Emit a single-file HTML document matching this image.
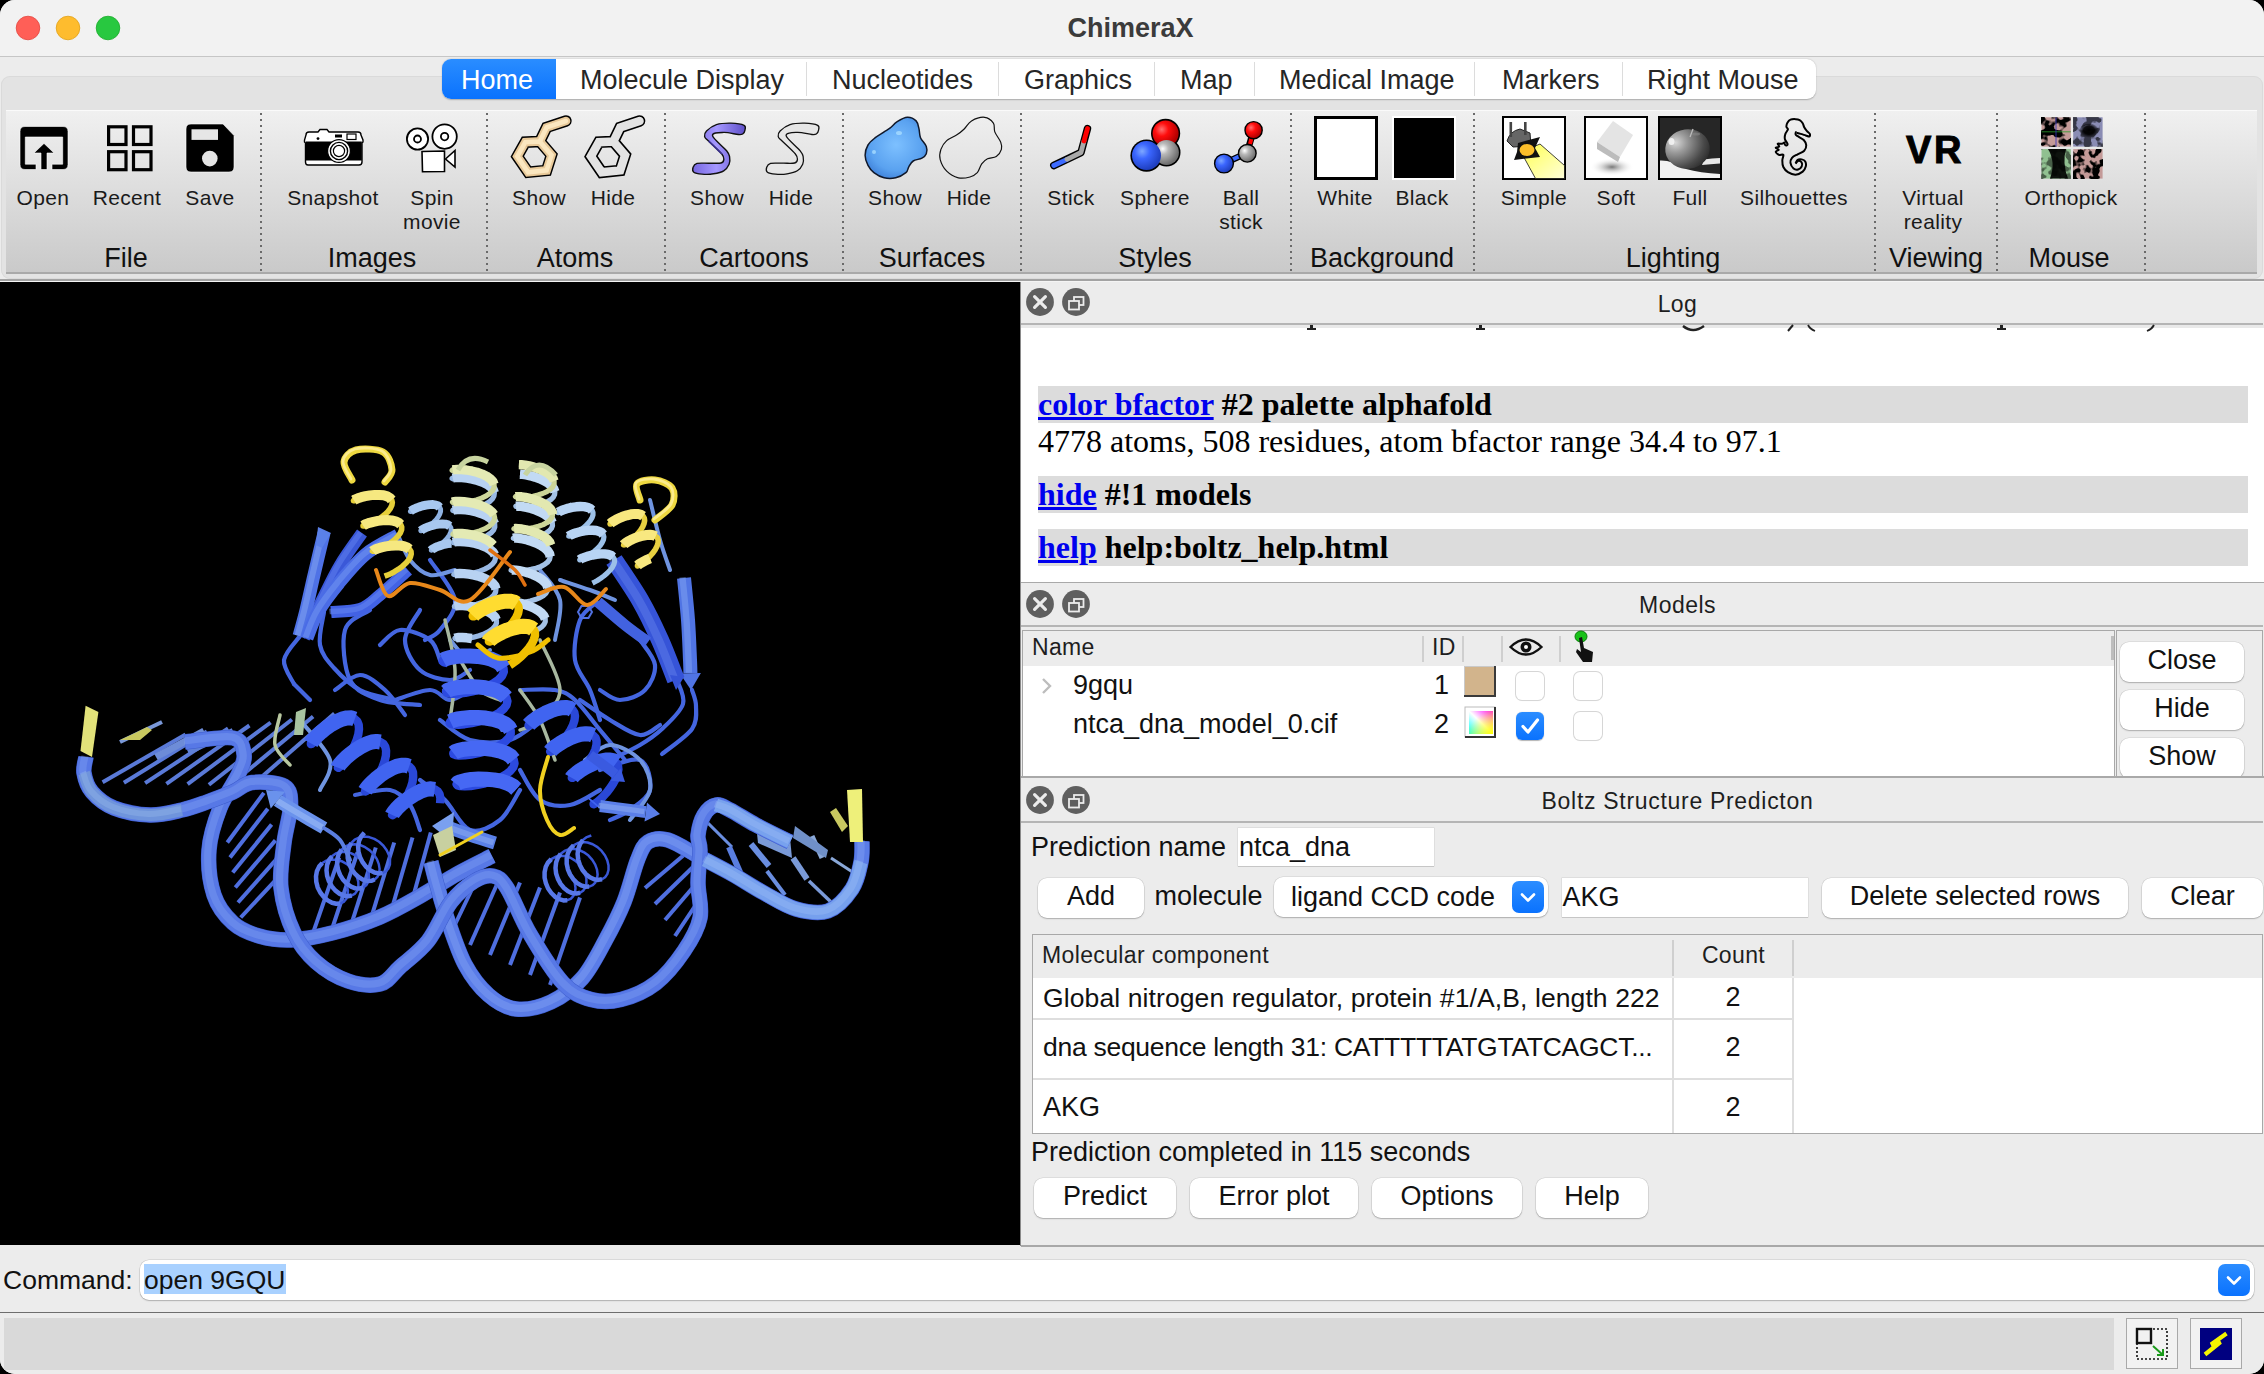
<!DOCTYPE html><html><head><meta charset="utf-8"><style>
html,body{margin:0;padding:0;background:#000;}
#w{position:absolute;left:0;top:0;width:2264px;height:1374px;overflow:hidden;border-radius:15px;background:#ececec;font-family:'Liberation Sans',sans-serif;}
svg{overflow:visible}
</style></head><body><div id="w">
<div style="position:absolute;left:0px;top:0px;width:2264px;height:56px;background:#f2f2f2"></div>
<div style="position:absolute;left:0px;top:56px;width:2264px;height:1px;background:#c6c6c6"></div>
<svg style="position:absolute;left:14.5px;top:14.5px" width="26" height="26" viewBox="0 0 26 26"><circle cx="13" cy="13" r="11.8" fill="#ff5f57" stroke="#e2463f" stroke-width="0.8"/></svg>
<svg style="position:absolute;left:54.5px;top:14.5px" width="26" height="26" viewBox="0 0 26 26"><circle cx="13" cy="13" r="11.8" fill="#febc2e" stroke="#e1a116" stroke-width="0.8"/></svg>
<svg style="position:absolute;left:94.5px;top:14.5px" width="26" height="26" viewBox="0 0 26 26"><circle cx="13" cy="13" r="11.8" fill="#28c840" stroke="#1aab29" stroke-width="0.8"/></svg>
<div style="position:absolute;top:14.64px;font-family:'Liberation Sans', sans-serif;font-size:27px;line-height:27px;color:#3b3b3b;font-weight:bold;white-space:nowrap;left:730.5px;width:800px;text-align:center;">ChimeraX</div>
<div style="position:absolute;left:1px;top:76px;width:2262px;height:203px;background:#e3e3e3;border-radius:9px;box-shadow:inset 0 0 0 1px #dadada"></div>
<div style="position:absolute;left:6px;top:110px;width:2251px;height:164px;background:linear-gradient(#f0f0f0,#c9c9c9);border-top:1px solid #fafafa;box-sizing:border-box"></div>
<div style="position:absolute;left:6px;top:272px;width:2251px;height:2px;background:#a9a9a9"></div>
<div style="position:absolute;left:0px;top:279px;width:2264px;height:2px;background:#a3a3a3"></div>
<div style="position:absolute;left:0px;top:281px;width:2264px;height:1px;background:#f4f4f4"></div>
<div style="position:absolute;left:442px;top:59px;width:1374px;height:40px;background:#fff;border-radius:9px;box-shadow:0 0.5px 1.5px rgba(0,0,0,0.25)"></div>
<div style="position:absolute;left:442px;top:59px;width:114px;height:40px;background:linear-gradient(#2a8dff,#0a72fe);border-radius:9px 0 0 9px"></div>
<div style="position:absolute;top:66.94px;font-family:'Liberation Sans', sans-serif;font-size:27px;line-height:27px;color:#fff;font-weight:normal;white-space:nowrap;left:461px;">Home</div>
<div style="position:absolute;top:66.94px;font-family:'Liberation Sans', sans-serif;font-size:27px;line-height:27px;color:#262626;font-weight:normal;white-space:nowrap;left:580px;">Molecule Display</div>
<div style="position:absolute;left:806px;top:62px;width:1px;height:34px;background:#dcdcdc"></div>
<div style="position:absolute;top:66.94px;font-family:'Liberation Sans', sans-serif;font-size:27px;line-height:27px;color:#262626;font-weight:normal;white-space:nowrap;left:832px;">Nucleotides</div>
<div style="position:absolute;left:998px;top:62px;width:1px;height:34px;background:#dcdcdc"></div>
<div style="position:absolute;top:66.94px;font-family:'Liberation Sans', sans-serif;font-size:27px;line-height:27px;color:#262626;font-weight:normal;white-space:nowrap;left:1024px;">Graphics</div>
<div style="position:absolute;left:1154px;top:62px;width:1px;height:34px;background:#dcdcdc"></div>
<div style="position:absolute;top:66.94px;font-family:'Liberation Sans', sans-serif;font-size:27px;line-height:27px;color:#262626;font-weight:normal;white-space:nowrap;left:1180px;">Map</div>
<div style="position:absolute;left:1254px;top:62px;width:1px;height:34px;background:#dcdcdc"></div>
<div style="position:absolute;top:66.94px;font-family:'Liberation Sans', sans-serif;font-size:27px;line-height:27px;color:#262626;font-weight:normal;white-space:nowrap;left:1279px;">Medical Image</div>
<div style="position:absolute;left:1474px;top:62px;width:1px;height:34px;background:#dcdcdc"></div>
<div style="position:absolute;top:66.94px;font-family:'Liberation Sans', sans-serif;font-size:27px;line-height:27px;color:#262626;font-weight:normal;white-space:nowrap;left:1502px;">Markers</div>
<div style="position:absolute;left:1622px;top:62px;width:1px;height:34px;background:#dcdcdc"></div>
<div style="position:absolute;top:66.94px;font-family:'Liberation Sans', sans-serif;font-size:27px;line-height:27px;color:#262626;font-weight:normal;white-space:nowrap;left:1647px;">Right Mouse</div>
<div style="position:absolute;left:260px;top:113px;width:2px;height:158px;background:repeating-linear-gradient(#6a6a6a 0 2px, transparent 2px 6px)"></div>
<div style="position:absolute;left:486px;top:113px;width:2px;height:158px;background:repeating-linear-gradient(#6a6a6a 0 2px, transparent 2px 6px)"></div>
<div style="position:absolute;left:664px;top:113px;width:2px;height:158px;background:repeating-linear-gradient(#6a6a6a 0 2px, transparent 2px 6px)"></div>
<div style="position:absolute;left:842px;top:113px;width:2px;height:158px;background:repeating-linear-gradient(#6a6a6a 0 2px, transparent 2px 6px)"></div>
<div style="position:absolute;left:1020px;top:113px;width:2px;height:158px;background:repeating-linear-gradient(#6a6a6a 0 2px, transparent 2px 6px)"></div>
<div style="position:absolute;left:1290px;top:113px;width:2px;height:158px;background:repeating-linear-gradient(#6a6a6a 0 2px, transparent 2px 6px)"></div>
<div style="position:absolute;left:1473px;top:113px;width:2px;height:158px;background:repeating-linear-gradient(#6a6a6a 0 2px, transparent 2px 6px)"></div>
<div style="position:absolute;left:1874px;top:113px;width:2px;height:158px;background:repeating-linear-gradient(#6a6a6a 0 2px, transparent 2px 6px)"></div>
<div style="position:absolute;left:1996px;top:113px;width:2px;height:158px;background:repeating-linear-gradient(#6a6a6a 0 2px, transparent 2px 6px)"></div>
<div style="position:absolute;left:2144px;top:113px;width:2px;height:158px;background:repeating-linear-gradient(#6a6a6a 0 2px, transparent 2px 6px)"></div>
<div style="position:absolute;top:187.22px;font-family:'Liberation Sans', sans-serif;font-size:21px;line-height:21px;color:#1a1a1a;font-weight:normal;white-space:nowrap;letter-spacing:0.35px;left:-357px;width:800px;text-align:center;">Open</div>
<div style="position:absolute;top:187.22px;font-family:'Liberation Sans', sans-serif;font-size:21px;line-height:21px;color:#1a1a1a;font-weight:normal;white-space:nowrap;letter-spacing:0.35px;left:-273px;width:800px;text-align:center;">Recent</div>
<div style="position:absolute;top:187.22px;font-family:'Liberation Sans', sans-serif;font-size:21px;line-height:21px;color:#1a1a1a;font-weight:normal;white-space:nowrap;letter-spacing:0.35px;left:-190px;width:800px;text-align:center;">Save</div>
<div style="position:absolute;top:187.22px;font-family:'Liberation Sans', sans-serif;font-size:21px;line-height:21px;color:#1a1a1a;font-weight:normal;white-space:nowrap;letter-spacing:0.35px;left:-67px;width:800px;text-align:center;">Snapshot</div>
<div style="position:absolute;top:187.22px;font-family:'Liberation Sans', sans-serif;font-size:21px;line-height:21px;color:#1a1a1a;font-weight:normal;white-space:nowrap;letter-spacing:0.35px;left:32px;width:800px;text-align:center;">Spin</div>
<div style="position:absolute;top:187.22px;font-family:'Liberation Sans', sans-serif;font-size:21px;line-height:21px;color:#1a1a1a;font-weight:normal;white-space:nowrap;letter-spacing:0.35px;left:139px;width:800px;text-align:center;">Show</div>
<div style="position:absolute;top:187.22px;font-family:'Liberation Sans', sans-serif;font-size:21px;line-height:21px;color:#1a1a1a;font-weight:normal;white-space:nowrap;letter-spacing:0.35px;left:213px;width:800px;text-align:center;">Hide</div>
<div style="position:absolute;top:187.22px;font-family:'Liberation Sans', sans-serif;font-size:21px;line-height:21px;color:#1a1a1a;font-weight:normal;white-space:nowrap;letter-spacing:0.35px;left:317px;width:800px;text-align:center;">Show</div>
<div style="position:absolute;top:187.22px;font-family:'Liberation Sans', sans-serif;font-size:21px;line-height:21px;color:#1a1a1a;font-weight:normal;white-space:nowrap;letter-spacing:0.35px;left:391px;width:800px;text-align:center;">Hide</div>
<div style="position:absolute;top:187.22px;font-family:'Liberation Sans', sans-serif;font-size:21px;line-height:21px;color:#1a1a1a;font-weight:normal;white-space:nowrap;letter-spacing:0.35px;left:495px;width:800px;text-align:center;">Show</div>
<div style="position:absolute;top:187.22px;font-family:'Liberation Sans', sans-serif;font-size:21px;line-height:21px;color:#1a1a1a;font-weight:normal;white-space:nowrap;letter-spacing:0.35px;left:569px;width:800px;text-align:center;">Hide</div>
<div style="position:absolute;top:187.22px;font-family:'Liberation Sans', sans-serif;font-size:21px;line-height:21px;color:#1a1a1a;font-weight:normal;white-space:nowrap;letter-spacing:0.35px;left:671px;width:800px;text-align:center;">Stick</div>
<div style="position:absolute;top:187.22px;font-family:'Liberation Sans', sans-serif;font-size:21px;line-height:21px;color:#1a1a1a;font-weight:normal;white-space:nowrap;letter-spacing:0.35px;left:755px;width:800px;text-align:center;">Sphere</div>
<div style="position:absolute;top:187.22px;font-family:'Liberation Sans', sans-serif;font-size:21px;line-height:21px;color:#1a1a1a;font-weight:normal;white-space:nowrap;letter-spacing:0.35px;left:841px;width:800px;text-align:center;">Ball</div>
<div style="position:absolute;top:187.22px;font-family:'Liberation Sans', sans-serif;font-size:21px;line-height:21px;color:#1a1a1a;font-weight:normal;white-space:nowrap;letter-spacing:0.35px;left:945px;width:800px;text-align:center;">White</div>
<div style="position:absolute;top:187.22px;font-family:'Liberation Sans', sans-serif;font-size:21px;line-height:21px;color:#1a1a1a;font-weight:normal;white-space:nowrap;letter-spacing:0.35px;left:1022px;width:800px;text-align:center;">Black</div>
<div style="position:absolute;top:187.22px;font-family:'Liberation Sans', sans-serif;font-size:21px;line-height:21px;color:#1a1a1a;font-weight:normal;white-space:nowrap;letter-spacing:0.35px;left:1134px;width:800px;text-align:center;">Simple</div>
<div style="position:absolute;top:187.22px;font-family:'Liberation Sans', sans-serif;font-size:21px;line-height:21px;color:#1a1a1a;font-weight:normal;white-space:nowrap;letter-spacing:0.35px;left:1216px;width:800px;text-align:center;">Soft</div>
<div style="position:absolute;top:187.22px;font-family:'Liberation Sans', sans-serif;font-size:21px;line-height:21px;color:#1a1a1a;font-weight:normal;white-space:nowrap;letter-spacing:0.35px;left:1290px;width:800px;text-align:center;">Full</div>
<div style="position:absolute;top:187.22px;font-family:'Liberation Sans', sans-serif;font-size:21px;line-height:21px;color:#1a1a1a;font-weight:normal;white-space:nowrap;letter-spacing:0.35px;left:1394px;width:800px;text-align:center;">Silhouettes</div>
<div style="position:absolute;top:187.22px;font-family:'Liberation Sans', sans-serif;font-size:21px;line-height:21px;color:#1a1a1a;font-weight:normal;white-space:nowrap;letter-spacing:0.35px;left:1533px;width:800px;text-align:center;">Virtual</div>
<div style="position:absolute;top:187.22px;font-family:'Liberation Sans', sans-serif;font-size:21px;line-height:21px;color:#1a1a1a;font-weight:normal;white-space:nowrap;letter-spacing:0.35px;left:1671px;width:800px;text-align:center;">Orthopick</div>
<div style="position:absolute;top:211.22px;font-family:'Liberation Sans', sans-serif;font-size:21px;line-height:21px;color:#1a1a1a;font-weight:normal;white-space:nowrap;letter-spacing:0.35px;left:32px;width:800px;text-align:center;">movie</div>
<div style="position:absolute;top:211.22px;font-family:'Liberation Sans', sans-serif;font-size:21px;line-height:21px;color:#1a1a1a;font-weight:normal;white-space:nowrap;letter-spacing:0.35px;left:841px;width:800px;text-align:center;">stick</div>
<div style="position:absolute;top:211.22px;font-family:'Liberation Sans', sans-serif;font-size:21px;line-height:21px;color:#1a1a1a;font-weight:normal;white-space:nowrap;letter-spacing:0.35px;left:1533px;width:800px;text-align:center;">reality</div>
<div style="position:absolute;top:245.14px;font-family:'Liberation Sans', sans-serif;font-size:27px;line-height:27px;color:#111;font-weight:normal;white-space:nowrap;left:-274px;width:800px;text-align:center;">File</div>
<div style="position:absolute;top:245.14px;font-family:'Liberation Sans', sans-serif;font-size:27px;line-height:27px;color:#111;font-weight:normal;white-space:nowrap;left:-28px;width:800px;text-align:center;">Images</div>
<div style="position:absolute;top:245.14px;font-family:'Liberation Sans', sans-serif;font-size:27px;line-height:27px;color:#111;font-weight:normal;white-space:nowrap;left:175px;width:800px;text-align:center;">Atoms</div>
<div style="position:absolute;top:245.14px;font-family:'Liberation Sans', sans-serif;font-size:27px;line-height:27px;color:#111;font-weight:normal;white-space:nowrap;left:354px;width:800px;text-align:center;">Cartoons</div>
<div style="position:absolute;top:245.14px;font-family:'Liberation Sans', sans-serif;font-size:27px;line-height:27px;color:#111;font-weight:normal;white-space:nowrap;left:532px;width:800px;text-align:center;">Surfaces</div>
<div style="position:absolute;top:245.14px;font-family:'Liberation Sans', sans-serif;font-size:27px;line-height:27px;color:#111;font-weight:normal;white-space:nowrap;left:755px;width:800px;text-align:center;">Styles</div>
<div style="position:absolute;top:245.14px;font-family:'Liberation Sans', sans-serif;font-size:27px;line-height:27px;color:#111;font-weight:normal;white-space:nowrap;left:982px;width:800px;text-align:center;">Background</div>
<div style="position:absolute;top:245.14px;font-family:'Liberation Sans', sans-serif;font-size:27px;line-height:27px;color:#111;font-weight:normal;white-space:nowrap;left:1273px;width:800px;text-align:center;">Lighting</div>
<div style="position:absolute;top:245.14px;font-family:'Liberation Sans', sans-serif;font-size:27px;line-height:27px;color:#111;font-weight:normal;white-space:nowrap;left:1536px;width:800px;text-align:center;">Viewing</div>
<div style="position:absolute;top:245.14px;font-family:'Liberation Sans', sans-serif;font-size:27px;line-height:27px;color:#111;font-weight:normal;white-space:nowrap;left:1669px;width:800px;text-align:center;">Mouse</div>
<svg style="position:absolute;left:0px;top:0px;" width="2264" height="282">
<g>
<!-- Open -->
<path d="M25 126.5 H63 Q68 126.5 68 131.5 V164.5 Q68 169.5 63 169.5 H52 V164.2 H62.7 V137 H25.3 V164.2 H36 V169.5 H25 Q20 169.5 20 164.5 V131.5 Q20 126.5 25 126.5Z" fill="#000" stroke="#fff" stroke-opacity="0.6" stroke-width="1"/>
<path d="M41 169.5 V153 H34 L44 143.4 L54 153 H47 V169.5Z" fill="#000" stroke="#fff" stroke-opacity="0.6" stroke-width="1"/>
<!-- Recent -->
<rect x="108.6" y="126.8" width="17.4" height="17.7" fill="none" stroke="#000" stroke-width="3.2"/>
<rect x="133.5" y="126.8" width="17.5" height="17.7" fill="none" stroke="#000" stroke-width="3.2"/>
<rect x="108.6" y="151.7" width="17.4" height="18" fill="none" stroke="#000" stroke-width="3.2"/>
<rect x="133.5" y="151.7" width="17.5" height="18" fill="none" stroke="#000" stroke-width="3.2"/>
<!-- Save -->
<path d="M191 124 H223 L234 135.5 V167 Q234 172 229 172 H191 Q186 172 186 167 V129 Q186 124 191 124Z" fill="#000" stroke="#fff" stroke-opacity="0.6" stroke-width="1"/>
<rect x="191.5" y="129.3" width="26.5" height="10.6" fill="#e6e6e6"/>
<circle cx="209.8" cy="158.6" r="7.8" fill="#e4e4e4"/>
</g>
<!-- Snapshot camera -->
<g>
<path d="M309 132 L318 132 L320 129.5 L327 129.5 L329 132 L358 132 Q361 132 361 135 L363 140 L363 142 L362 143 L362 162 Q362 165 359 165 L308 165 Q305.5 165 305.5 162 L305.5 143 L304.5 142 L304.5 140 L306 135 Q306 132 309 132Z" fill="#fff" stroke="#000" stroke-width="1.4"/>
<rect x="305.8" y="141.5" width="56" height="19" fill="#000"/>
<rect x="335" y="134.5" width="7" height="3" fill="#000"/>
<rect x="347" y="134" width="9" height="5.5" fill="#fff" stroke="#000" stroke-width="1.2"/>
<circle cx="318" cy="138.6" r="1.4" fill="#000"/>
<circle cx="339" cy="151" r="11.4" fill="#fff" stroke="#000" stroke-width="1.2"/>
<circle cx="339" cy="151" r="8.6" fill="#fff" stroke="#000" stroke-width="1.4"/>
<circle cx="339" cy="151" r="5.6" fill="#fff" stroke="#000" stroke-width="1.2"/>
</g>
<!-- Spin movie -->
<g stroke="#000" fill="#fff">
<circle cx="417.5" cy="139" r="10.6" stroke-width="1.8"/>
<circle cx="417.5" cy="139" r="3.5" stroke-width="1.8"/>
<circle cx="444.6" cy="136.6" r="12.2" stroke-width="1.8"/>
<circle cx="444.6" cy="136.6" r="3.7" stroke-width="1.8"/>
<path d="M422 151.5 L444.5 151 L444.5 171.5 L422.5 171.8Z" stroke-width="1.6"/>
<path d="M445.5 159 L455 150.5 L455 167 Z" stroke-width="1.6"/>
</g>
</svg>
<svg style="position:absolute;left:0px;top:0px;" width="700" height="282">
<g fill="none" stroke-linejoin="round" stroke-linecap="round">
<path d="M517.3 156.4 L525.3 142.2 L539.8 141.5 L551.5 155.1 L546.6 170.4 L528.2 172.3Z M539.8 141.5 L546.6 127.4 L566 121" stroke="#000" stroke-width="11.5" stroke-linejoin="miter"/>
<path d="M517.3 156.4 L525.3 142.2 L539.8 141.5 L551.5 155.1 L546.6 170.4 L528.2 172.3Z M539.8 141.5 L546.6 127.4 L566 121" stroke="#e8c999" stroke-width="8.6" stroke-linejoin="miter"/>
<path d="M517.3 156.4 L525.3 142.2 L539.8 141.5 L551.5 155.1 L546.6 170.4 L528.2 172.3Z M539.8 141.5 L546.6 127.4 L566 121" stroke="#fbe7c0" stroke-width="4.6" stroke-linejoin="miter"/>
</g>
<g fill="none" stroke-linejoin="miter" stroke-linecap="round" transform="translate(73.6,0)">
<path d="M517.3 156.4 L525.3 142.2 L539.8 141.5 L551.5 155.1 L546.6 170.4 L528.2 172.3Z M539.8 141.5 L546.6 127.4 L566 121" stroke="#000" stroke-width="11.6"/>
<path d="M517.3 156.4 L525.3 142.2 L539.8 141.5 L551.5 155.1 L546.6 170.4 L528.2 172.3Z M539.8 141.5 L546.6 127.4 L566 121" stroke="#e3e3e3" stroke-width="8.4"/>
</g>
</svg>
<svg style="position:absolute;left:0px;top:0px;" width="1100" height="282">
<defs><linearGradient id="pg" x1="0" y1="0" x2="1" y2="0"><stop offset="0" stop-color="#7767e0"/><stop offset="0.45" stop-color="#a598ff"/><stop offset="1" stop-color="#5e4fc8"/></linearGradient></defs>
<path d="M744.1 125.3 C741.8 124.1 735.6 123.2 731.0 123.1 C726.4 123.0 720.5 123.3 716.4 124.6 C712.3 125.9 708.5 129.0 706.5 131.0 C704.5 133.0 704.3 134.8 704.6 136.5 C704.9 138.2 705.6 138.1 708.5 141.0 C711.4 143.9 719.2 150.9 721.8 154.0 C724.3 157.1 723.9 158.1 723.8 159.6 C723.7 161.1 723.5 162.4 721.0 163.0 C718.5 163.6 713.1 163.1 709.1 163.2 C705.1 163.3 699.7 162.7 697.0 163.4 C694.3 164.1 693.6 165.8 693.1 167.3 C692.6 168.8 692.3 171.1 693.8 172.2 C695.3 173.3 698.6 173.8 701.9 174.1 C705.2 174.4 709.9 174.4 713.5 173.8 C717.1 173.2 721.1 172.4 723.7 170.8 C726.3 169.2 728.1 166.5 729.1 164.2 C730.1 161.9 730.0 159.2 729.6 157.0 C729.2 154.8 729.5 154.4 726.6 150.8 C723.8 147.2 713.0 138.7 712.5 135.6 C712.0 132.5 719.4 132.6 723.7 132.4 C728.0 132.2 735.1 134.2 738.3 134.5 C741.5 134.8 741.6 134.7 742.7 134.0 C743.8 133.3 744.7 131.8 744.9 130.4 C745.1 129.0 746.4 126.5 744.1 125.3Z" fill="url(#pg)" stroke="#111" stroke-width="1.4"/>
<path d="M708.5 141 L721.8 154" fill="none" stroke="#3a3090" stroke-width="1.6"/>
<g transform="translate(73.6,0)"><path d="M744.1 125.3 C741.8 124.1 735.6 123.2 731.0 123.1 C726.4 123.0 720.5 123.3 716.4 124.6 C712.3 125.9 708.5 129.0 706.5 131.0 C704.5 133.0 704.3 134.8 704.6 136.5 C704.9 138.2 705.6 138.1 708.5 141.0 C711.4 143.9 719.2 150.9 721.8 154.0 C724.3 157.1 723.9 158.1 723.8 159.6 C723.7 161.1 723.5 162.4 721.0 163.0 C718.5 163.6 713.1 163.1 709.1 163.2 C705.1 163.3 699.7 162.7 697.0 163.4 C694.3 164.1 693.6 165.8 693.1 167.3 C692.6 168.8 692.3 171.1 693.8 172.2 C695.3 173.3 698.6 173.8 701.9 174.1 C705.2 174.4 709.9 174.4 713.5 173.8 C717.1 173.2 721.1 172.4 723.7 170.8 C726.3 169.2 728.1 166.5 729.1 164.2 C730.1 161.9 730.0 159.2 729.6 157.0 C729.2 154.8 729.5 154.4 726.6 150.8 C723.8 147.2 713.0 138.7 712.5 135.6 C712.0 132.5 719.4 132.6 723.7 132.4 C728.0 132.2 735.1 134.2 738.3 134.5 C741.5 134.8 741.6 134.7 742.7 134.0 C743.8 133.3 744.7 131.8 744.9 130.4 C745.1 129.0 746.4 126.5 744.1 125.3Z" fill="#e6e6e6" stroke="#111" stroke-width="1.3"/>
</g>
</svg>
<svg style="position:absolute;left:0px;top:0px;" width="1100" height="282">
<defs><radialGradient id="bg1" cx="0.5" cy="0.45" r="0.6"><stop offset="0" stop-color="#7dc0ff"/><stop offset="0.7" stop-color="#5aa2f0"/><stop offset="1" stop-color="#3d7fd8"/></radialGradient></defs>
<path d="M907.4 117.3 C910.5 117.2 914.2 119.0 916.1 120.9 C918.0 122.8 918.3 126.1 919.0 128.9 C919.7 131.7 919.3 134.8 920.5 137.7 C921.7 140.6 925.3 143.7 926.3 146.4 C927.3 149.1 927.0 151.8 926.3 153.7 C925.6 155.6 924.1 156.9 921.9 158.1 C919.7 159.3 915.4 159.6 913.2 161.0 C911.0 162.4 910.0 164.9 908.8 166.8 C907.6 168.8 908.1 170.9 905.9 172.7 C903.7 174.5 899.3 177.0 895.7 177.8 C892.1 178.7 887.7 178.7 884.1 177.8 C880.5 177.0 876.6 174.8 873.9 172.7 C871.2 170.6 869.5 168.3 868.0 165.4 C866.5 162.5 865.1 158.6 865.1 155.2 C865.1 151.8 866.3 147.9 868.0 145.0 C869.7 142.1 872.6 139.9 875.3 137.7 C878.0 135.5 881.7 133.5 884.1 131.9 C886.5 130.3 887.7 129.9 889.9 128.2 C892.1 126.5 894.3 123.5 897.2 121.7 C900.1 119.9 904.2 117.4 907.4 117.3Z" fill="url(#bg1)" stroke="#10182a" stroke-width="1.5"/>
<ellipse cx="899" cy="133" rx="3" ry="2" fill="#a8dcff" opacity="0.8"/>
<ellipse cx="874" cy="152" rx="2" ry="2" fill="#a8dcff" opacity="0.8"/>
<path d="M984.6 117.3 C988.2 117.7 991.7 120.7 993.4 123.1 C995.1 125.5 993.6 128.7 994.8 131.9 C996.0 135.1 999.6 139.2 1000.7 142.1 C1001.8 145.0 1002.1 147.0 1001.4 149.4 C1000.7 151.8 998.6 155.0 996.3 156.6 C994.0 158.2 989.9 157.6 987.5 158.8 C985.1 160.0 983.4 161.6 981.7 163.9 C980.0 166.2 979.2 170.5 977.3 172.7 C975.3 174.9 973.1 176.2 970.0 177.0 C966.9 177.8 962.3 178.8 958.4 177.8 C954.5 176.8 949.7 174.2 946.7 171.2 C943.7 168.2 941.2 163.2 940.2 159.6 C939.2 156.0 939.8 152.6 940.9 149.4 C942.0 146.2 944.0 143.0 946.7 140.6 C949.4 138.2 954.0 136.7 956.9 134.8 C959.8 132.9 961.8 131.3 964.2 129.0 C966.6 126.7 968.1 122.9 971.5 120.9 C974.9 119.0 981.0 116.9 984.6 117.3Z" fill="none" stroke="#111" stroke-width="1.2"/>
</svg>
<svg style="position:absolute;left:0px;top:0px;" width="1300" height="282">
<defs>
<radialGradient id="rb" cx="0.35" cy="0.35" r="0.65"><stop offset="0" stop-color="#7ea8ff"/><stop offset="0.4" stop-color="#3b66ff"/><stop offset="1" stop-color="#1f3fc0"/></radialGradient>
<radialGradient id="rg" cx="0.35" cy="0.35" r="0.65"><stop offset="0" stop-color="#ffffff"/><stop offset="0.35" stop-color="#b8b8b8"/><stop offset="1" stop-color="#6e6e6e"/></radialGradient>
<radialGradient id="rr" cx="0.35" cy="0.35" r="0.65"><stop offset="0" stop-color="#ff7070"/><stop offset="0.4" stop-color="#ff0d0d"/><stop offset="1" stop-color="#b00000"/></radialGradient>
</defs>
<g fill="none" stroke-linecap="round" stroke-linejoin="round">
<path d="M1053.8 165.5 L1081 152.5 L1087.5 128.5" stroke="#000" stroke-width="7.5"/>
<path d="M1053.8 165.5 L1067 159.3" stroke="#3d6bff" stroke-width="4.8"/>
<path d="M1067 159.3 L1081 152.5 L1084 141" stroke="#a8a8a8" stroke-width="4.8"/>
<path d="M1084 141 L1087.5 128.5" stroke="#f00" stroke-width="4.8"/>
</g>
<circle cx="1165.6" cy="133.4" r="14.6" fill="#000"/>
<circle cx="1166.5" cy="152.5" r="14" fill="#000"/>
<circle cx="1146.5" cy="155.6" r="16.1" fill="#000"/>
<circle cx="1165.6" cy="133.4" r="13" fill="url(#rr)"/>
<circle cx="1166.5" cy="152.5" r="12.4" fill="url(#rg)"/>
<circle cx="1146.5" cy="155.6" r="14.5" fill="url(#rb)"/>
<path d="M1224 163.5 L1247 153 L1253.6 130" stroke="#000" stroke-width="6.5" fill="none"/>
<path d="M1224 163.5 L1240 156" stroke="#3d6bff" stroke-width="4" fill="none"/>
<path d="M1250 144 L1253.6 130" stroke="#f00" stroke-width="4" fill="none"/>
<circle cx="1253.6" cy="130.2" r="8.6" fill="url(#rr)" stroke="#000" stroke-width="1.4"/>
<circle cx="1247.3" cy="153.3" r="8.8" fill="url(#rg)" stroke="#000" stroke-width="1.4"/>
<circle cx="1224" cy="163.5" r="9.4" fill="url(#rb)" stroke="#000" stroke-width="1.4"/>
</svg>
<svg style="position:absolute;left:0px;top:0px;" width="1500" height="282">
<rect x="1315.5" y="117.5" width="61" height="61" fill="#fff" stroke="#000" stroke-width="3"/>
<rect x="1392" y="116" width="64" height="64" fill="#fff"/>
<rect x="1394" y="118" width="60" height="60" fill="#000"/>
</svg>
<svg style="position:absolute;left:0px;top:0px;" width="2264" height="282">
<defs>
<linearGradient id="beam" x1="0" y1="0" x2="1" y2="1"><stop offset="0" stop-color="#ffff50"/><stop offset="1" stop-color="#ffffd8"/></linearGradient>
<radialGradient id="shadow" cx="0.5" cy="0.5" r="0.5"><stop offset="0" stop-color="#777"/><stop offset="1" stop-color="#fff" stop-opacity="0"/></radialGradient>
<radialGradient id="apple" cx="0.3" cy="0.3" r="0.8"><stop offset="0" stop-color="#e0e0e0"/><stop offset="0.35" stop-color="#8a8a8a"/><stop offset="1" stop-color="#2a2a2a"/></radialGradient>
</defs>
<rect x="1503" y="117" width="62" height="62" fill="#fff" stroke="#000" stroke-width="2"/>
<path d="M1521 152 L1540 144 L1564.5 165.5 L1564.5 178.5 L1535.5 178.5Z" fill="url(#beam)" stroke="#111" stroke-width="0.8"/>
<path d="M1507 141 Q1510 131 1520 129 L1530 133 L1531 146 L1513 147Z" fill="#666" stroke="#222" stroke-width="1"/>
<rect x="1509.5" y="122" width="2.6" height="15" fill="#444"/>
<rect x="1524" y="122" width="2.6" height="13" fill="#444"/>
<path d="M1518 143 L1540 137 L1535 148 L1540 157 L1514 160 L1517 152Z" fill="#111"/>
<ellipse cx="1527" cy="150" rx="7.5" ry="6" fill="#fbbe2a"/>
<rect x="1585" y="117" width="62" height="62" fill="#fff" stroke="#000" stroke-width="2"/>
<ellipse cx="1612" cy="167" rx="22" ry="9" fill="url(#shadow)"/>
<path d="M1613 121 L1633 135 L1620 157 L1597 142Z" fill="#e4e4e4"/>
<path d="M1597 142 L1620 157 L1618 162 L1597 149Z" fill="#bcbcbc"/>
<rect x="1659" y="117" width="62" height="62" fill="#262626" stroke="#000" stroke-width="2"/>
<path d="M1660 160.5 Q1672 160 1686 169 Q1700 173 1720 174 L1720 178 L1660 178Z" fill="#f2f2f2"/>
<path d="M1704 159.5 Q1712 158 1720 158 L1720 163.5 Q1710 164 1702 165Z" fill="#e8e8e8"/>
<radialGradient id="apple2" cx="0.25" cy="0.3" r="0.85"><stop offset="0" stop-color="#d8d8d8"/><stop offset="0.3" stop-color="#9a9a9a"/><stop offset="0.75" stop-color="#4a4a4a"/><stop offset="1" stop-color="#2a2a2a"/></radialGradient>
<ellipse cx="1687.5" cy="149" rx="22.3" ry="19.8" fill="url(#apple2)" transform="rotate(-8 1687.5 149)"/>
<ellipse cx="1671.5" cy="141.5" rx="3" ry="3.5" fill="#f4f4f4" opacity="0.9"/>
<path d="M1690 137 L1693 129" stroke="#bbb" stroke-width="1.3"/>
<ellipse cx="1696" cy="134" rx="4" ry="1.5" fill="#888" opacity="0.6"/>
</svg>
<svg style="position:absolute;left:0px;top:0px;" width="2264" height="282"><path d="M1796.07 131.36 C1795.99 131.87 1795.23 133.57 1795.57 134.41 C1795.91 135.26 1796.75 135.52 1798.11 136.45 C1799.47 137.39 1802.36 138.57 1803.72 140.02 C1805.07 141.46 1806.18 143.33 1806.26 145.11 C1806.35 146.90 1805.67 149.19 1804.23 150.72 C1802.78 152.24 1799.64 153.09 1797.60 154.28 C1795.57 155.47 1793.19 156.40 1792.00 157.85 C1790.81 159.29 1790.22 161.16 1790.47 162.94 C1790.73 164.73 1792.25 167.44 1793.53 168.55 C1794.80 169.65 1796.75 169.90 1798.11 169.56 C1799.47 169.23 1801.08 167.70 1801.68 166.51 C1802.27 165.32 1802.27 163.37 1801.68 162.43 C1801.08 161.50 1799.13 160.73 1798.11 160.90 C1797.09 161.07 1795.99 163.03 1795.57 163.45" fill="none" stroke="#000" stroke-width="2" stroke-linejoin="round"/><path d="M1796.58 132.89 C1797.26 133.06 1799.13 133.48 1800.66 133.91 C1802.19 134.33 1804.31 135.01 1805.75 135.43 C1807.20 135.86 1808.64 136.71 1809.32 136.45 C1810.00 136.20 1810.25 134.84 1809.83 133.91 C1809.40 132.97 1807.71 131.95 1806.77 130.85 C1805.84 129.74 1804.90 128.56 1804.23 127.28 C1803.55 126.01 1803.46 124.40 1802.70 123.21 C1801.93 122.02 1800.83 120.83 1799.64 120.15 C1798.45 119.47 1797.09 119.22 1795.57 119.13 C1794.04 119.05 1791.83 119.05 1790.47 119.64 C1789.11 120.24 1788.09 121.51 1787.41 122.70 C1786.74 123.89 1786.31 125.67 1786.40 126.77 C1786.48 127.88 1788.09 128.13 1787.92 129.32 C1787.75 130.51 1785.89 132.29 1785.38 133.91 C1784.87 135.52 1784.53 137.39 1784.87 139.00 C1785.21 140.61 1787.08 142.52 1787.41 143.58 C1787.75 144.65 1787.33 145.20 1786.91 145.37 C1786.48 145.54 1785.29 145.07 1784.87 144.60 C1784.44 144.14 1784.87 142.69 1784.36 142.57 C1783.85 142.44 1782.91 143.67 1781.81 143.84 C1780.71 144.01 1778.16 143.12 1777.74 143.58 C1777.31 144.05 1779.60 145.96 1779.26 146.64 C1778.92 147.32 1775.78 147.15 1775.70 147.66 C1775.61 148.17 1778.75 149.02 1778.75 149.70 C1778.75 150.38 1775.70 150.89 1775.70 151.74 C1775.70 152.58 1777.48 154.28 1778.75 154.79 C1780.03 155.30 1782.74 153.86 1783.34 154.79 C1783.93 155.73 1782.32 158.36 1782.32 160.40 C1782.32 162.43 1782.41 165.07 1783.34 167.02 C1784.27 168.97 1785.89 170.84 1787.92 172.11 C1789.96 173.39 1793.10 174.74 1795.57 174.66 C1798.03 174.57 1801.00 172.96 1802.70 171.60 C1804.40 170.24 1805.33 168.21 1805.75 166.51 C1806.18 164.81 1805.92 162.60 1805.24 161.41 C1804.57 160.23 1802.95 159.63 1801.68 159.38 C1800.40 159.12 1798.62 159.21 1797.60 159.89 C1796.58 160.57 1795.91 162.86 1795.57 163.45" fill="none" stroke="#000" stroke-width="2" stroke-linejoin="round"/></svg>
<div style="position:absolute;left:1885px;top:131px;width:100px;text-align:center;font:bold 38px 'Liberation Sans',sans-serif;line-height:38px;color:#000;letter-spacing:2.5px;-webkit-text-stroke:1px #000">VR</div>
<svg style="position:absolute;left:0px;top:0px;" width="2264" height="282">
<defs>
<filter id="bl1" x="0" y="0" width="1" height="1"><feTurbulence type="fractalNoise" baseFrequency="0.11" numOctaves="2" seed="11"/><feColorMatrix type="matrix" values="0 0 0 0 0  0 0 0 0 0  0 0 0 0 0  -9 0 0 0 5.0"/><feGaussianBlur stdDeviation="0.6"/></filter>
<filter id="bl2" x="0" y="0" width="1" height="1"><feTurbulence type="fractalNoise" baseFrequency="0.13" numOctaves="2" seed="4"/><feColorMatrix type="matrix" values="0 0 0 0 0  0 0 0 0 0  0 0 0 0 0  -9 0 0 0 5.0"/><feGaussianBlur stdDeviation="0.6"/></filter>
<filter id="bl3" x="0" y="0" width="1" height="1"><feTurbulence type="fractalNoise" baseFrequency="0.12" numOctaves="2" seed="21"/><feColorMatrix type="matrix" values="0 0 0 0 0  0 0 0 0 0  0 0 0 0 0  -9 0 0 0 5.0"/><feGaussianBlur stdDeviation="0.6"/></filter>
<radialGradient id="ctr" cx="0.5" cy="0.45" r="0.5"><stop offset="0" stop-color="#000"/><stop offset="0.55" stop-color="#000" stop-opacity="0.9"/><stop offset="1" stop-color="#000" stop-opacity="0"/></radialGradient>
</defs>
<rect x="2041.5" y="117.3" width="29.3" height="29.3" fill="#c49a98"/>
<rect x="2041.5" y="117.3" width="29.3" height="29.3" filter="url(#bl1)"/>
<rect x="2073.2" y="117.3" width="29.4" height="29.3" fill="#8a8cb4"/>
<ellipse cx="2089" cy="131" rx="10" ry="7.5" fill="url(#ctr)"/>
<rect x="2073.2" y="117.3" width="29.4" height="29.3" filter="url(#bl2)" opacity="0.6"/>
<rect x="2041.5" y="149.1" width="29.3" height="29.5" fill="#90c090"/>
<path d="M2048 149.1 Q2056 162 2050 178.6 L2068 178.6 Q2062 163 2066 149.1Z" fill="#000" opacity="0.9"/>
<rect x="2041.5" y="149.1" width="29.3" height="29.5" filter="url(#bl3)" opacity="0.5"/>
<rect x="2073.2" y="149.1" width="29.4" height="29.5" fill="#c49a98"/>
<rect x="2073.2" y="149.1" width="29.4" height="29.5" filter="url(#bl2)"/>
<path d="M2041.5 131.8 H2070.8" stroke="#2a9a2a" stroke-width="0.8"/>
<path d="M2056 117.3 V146.6" stroke="#3030c0" stroke-width="0.8"/>
</svg>
<div style="position:absolute;left:0px;top:282px;width:1020px;height:963px;background:#000"></div>
<svg style="position:absolute;left:0;top:282px" width="1020" height="963" viewBox="0 282 1020 963"><path d="M102.6 782.2 L185.6 734.5" stroke="#5a7ad8" stroke-width="4" stroke-linecap="butt"/>
<path d="M123.9 782.8 L206.9 731.5" stroke="#5a7ad8" stroke-width="4" stroke-linecap="butt"/>
<path d="M145.1 783.2 L228.1 728.5" stroke="#5a7ad8" stroke-width="4" stroke-linecap="butt"/>
<path d="M166.4 783.8 L249.4 725.5" stroke="#5a7ad8" stroke-width="4" stroke-linecap="butt"/>
<path d="M187.6 784.2 L270.6 722.5" stroke="#5a7ad8" stroke-width="4" stroke-linecap="butt"/>
<path d="M208.9 784.8 L291.9 719.5" stroke="#5a7ad8" stroke-width="4" stroke-linecap="butt"/>
<path d="M230.1 785.2 L313.1 716.5" stroke="#5a7ad8" stroke-width="4" stroke-linecap="butt"/>
<path d="M251.4 785.8 L334.4 713.5" stroke="#5a7ad8" stroke-width="4" stroke-linecap="butt"/>
<path d="M156.0 757.0 L204.0 731.0" stroke="#6d8cd8" stroke-width="7" stroke-linecap="butt"/>
<path d="M188.0 752.0 L233.0 731.0" stroke="#5f80d8" stroke-width="6" stroke-linecap="butt"/>
<path d="M120.0 742.0 L162.0 722.0" stroke="#7a98d8" stroke-width="4" stroke-linecap="butt"/>
<path d="M227.3 842.5 L263.9 792.9" stroke="#4f6fe0" stroke-width="4" stroke-linecap="butt"/>
<path d="M230.0 857.5 L267.8 808.8" stroke="#4f6fe0" stroke-width="4" stroke-linecap="butt"/>
<path d="M232.7 872.5 L271.6 824.6" stroke="#4f6fe0" stroke-width="4" stroke-linecap="butt"/>
<path d="M235.3 887.5 L275.4 840.4" stroke="#4f6fe0" stroke-width="4" stroke-linecap="butt"/>
<path d="M238.0 902.5 L279.2 856.2" stroke="#4f6fe0" stroke-width="4" stroke-linecap="butt"/>
<path d="M240.7 917.5 L283.1 872.1" stroke="#4f6fe0" stroke-width="4" stroke-linecap="butt"/>
<path d="M310.0 941.7 L339.2 857.5" stroke="#4f6fe0" stroke-width="4" stroke-linecap="butt"/>
<path d="M330.0 935.0 L357.5 852.5" stroke="#4f6fe0" stroke-width="4" stroke-linecap="butt"/>
<path d="M350.0 928.3 L375.8 847.5" stroke="#4f6fe0" stroke-width="4" stroke-linecap="butt"/>
<path d="M370.0 921.7 L394.2 842.5" stroke="#4f6fe0" stroke-width="4" stroke-linecap="butt"/>
<path d="M390.0 915.0 L412.5 837.5" stroke="#4f6fe0" stroke-width="4" stroke-linecap="butt"/>
<path d="M410.0 908.3 L430.8 832.5" stroke="#4f6fe0" stroke-width="4" stroke-linecap="butt"/>
<path d="M450.0 935.0 L480.0 872.5" stroke="#4f6fe0" stroke-width="4" stroke-linecap="butt"/>
<path d="M470.0 945.0 L500.0 877.5" stroke="#4f6fe0" stroke-width="4" stroke-linecap="butt"/>
<path d="M490.0 955.0 L520.0 882.5" stroke="#4f6fe0" stroke-width="4" stroke-linecap="butt"/>
<path d="M510.0 965.0 L540.0 887.5" stroke="#4f6fe0" stroke-width="4" stroke-linecap="butt"/>
<path d="M530.0 975.0 L560.0 892.5" stroke="#4f6fe0" stroke-width="4" stroke-linecap="butt"/>
<path d="M550.0 985.0 L580.0 897.5" stroke="#4f6fe0" stroke-width="4" stroke-linecap="butt"/>
<path d="M645.0 888.0 L691.0 849.0" stroke="#4f6fe0" stroke-width="4" stroke-linecap="butt"/>
<path d="M655.0 904.0 L693.0 867.0" stroke="#4f6fe0" stroke-width="4" stroke-linecap="butt"/>
<path d="M665.0 920.0 L695.0 885.0" stroke="#4f6fe0" stroke-width="4" stroke-linecap="butt"/>
<path d="M675.0 936.0 L697.0 903.0" stroke="#4f6fe0" stroke-width="4" stroke-linecap="butt"/>
<path d="M685.0 952.0 L699.0 921.0" stroke="#4f6fe0" stroke-width="4" stroke-linecap="butt"/>
<path d="M706.5 821.6 L732.0 847.0" stroke="#6a8ee0" stroke-width="3" stroke-linecap="butt"/>
<path d="M729.0 847.0 L741.7 876.0" stroke="#5a7ee0" stroke-width="6" stroke-linecap="butt"/>
<path d="M751.0 844.0 L769.0 866.0" stroke="#6a8ee0" stroke-width="6" stroke-linecap="butt"/>
<path d="M767.0 871.0 L785.0 895.0" stroke="#6a8ee0" stroke-width="4" stroke-linecap="butt"/>
<path d="M793.0 858.0 L807.0 879.0" stroke="#7a9ad8" stroke-width="6" stroke-linecap="butt"/>
<path d="M809.0 881.0 L831.0 902.0" stroke="#7a9ad8" stroke-width="3.5" stroke-linecap="butt"/>
<path d="M831.0 858.0 L854.0 873.0" stroke="#8aa8d8" stroke-width="3" stroke-linecap="butt"/>
<path d="M812.0 836.0 L822.0 858.0" stroke="#8aa8d8" stroke-width="5" stroke-linecap="butt"/>
<path d="M756.0 824.0 L790.0 838.0 L792.0 858.0 L758.0 843.0Z" fill="#7a9ad8"/>
<path d="M795.0 826.0 L828.0 850.0 L826.0 858.0 L793.0 838.0Z" fill="#7090c8"/>
<path d="M185.0 742.0 C193.0 741.3 223.2 736.0 233.0 738.0 C242.8 740.0 243.0 748.2 244.0 754.0 C245.0 759.8 243.0 764.0 239.0 773.0 C235.0 782.0 225.0 795.2 220.0 808.0 C215.0 820.8 210.0 835.5 209.0 850.0 C208.0 864.5 210.0 882.8 214.0 895.0 C218.0 907.2 225.5 916.2 233.0 923.0 C240.5 929.8 249.3 933.2 259.0 936.0 C268.7 938.8 278.8 940.5 291.0 940.0 C303.2 939.5 317.2 936.8 332.0 933.0 C346.8 929.2 365.0 923.3 380.0 917.0 C395.0 910.7 409.2 902.2 422.0 895.0 C434.8 887.8 445.3 880.5 457.0 874.0 C468.7 867.5 486.2 859.0 492.0 856.0" fill="none" stroke="#3d5ccc" stroke-width="15.5" stroke-linejoin="round"/>
<path d="M185.0 742.0 C193.0 741.3 223.2 736.0 233.0 738.0 C242.8 740.0 243.0 748.2 244.0 754.0 C245.0 759.8 243.0 764.0 239.0 773.0 C235.0 782.0 225.0 795.2 220.0 808.0 C215.0 820.8 210.0 835.5 209.0 850.0 C208.0 864.5 210.0 882.8 214.0 895.0 C218.0 907.2 225.5 916.2 233.0 923.0 C240.5 929.8 249.3 933.2 259.0 936.0 C268.7 938.8 278.8 940.5 291.0 940.0 C303.2 939.5 317.2 936.8 332.0 933.0 C346.8 929.2 365.0 923.3 380.0 917.0 C395.0 910.7 409.2 902.2 422.0 895.0 C434.8 887.8 445.3 880.5 457.0 874.0 C468.7 867.5 486.2 859.0 492.0 856.0" fill="none" stroke="#5778e6" stroke-width="14.5" stroke-linejoin="round"/>
<path d="M185.0 742.0 C193.0 741.3 223.2 736.0 233.0 738.0 C242.8 740.0 243.0 748.2 244.0 754.0 C245.0 759.8 243.0 764.0 239.0 773.0 C235.0 782.0 225.0 795.2 220.0 808.0 C215.0 820.8 210.0 835.5 209.0 850.0 C208.0 864.5 210.0 882.8 214.0 895.0 C218.0 907.2 225.5 916.2 233.0 923.0 C240.5 929.8 249.3 933.2 259.0 936.0 C268.7 938.8 278.8 940.5 291.0 940.0 C303.2 939.5 317.2 936.8 332.0 933.0 C346.8 929.2 365.0 923.3 380.0 917.0 C395.0 910.7 409.2 902.2 422.0 895.0 C434.8 887.8 445.3 880.5 457.0 874.0 C468.7 867.5 486.2 859.0 492.0 856.0" fill="none" stroke="#86a6f4" stroke-width="7.2" stroke-linejoin="round" opacity="0.35" transform="translate(-1,-1)"/>
<path d="M862.0 841.0 C861.8 844.5 862.7 854.0 861.0 862.0 C859.3 870.0 857.5 880.8 852.0 889.0 C846.5 897.2 837.3 907.7 828.0 911.0 C818.7 914.3 806.7 912.0 796.0 909.0 C785.3 906.0 774.7 898.8 764.0 893.0 C753.3 887.2 742.7 880.0 732.0 874.0 C721.3 868.0 710.7 862.7 700.0 857.0 C689.3 851.3 676.7 842.5 668.0 840.0 C659.3 837.5 653.1 838.7 648.0 842.0 C642.9 845.3 641.5 850.0 637.5 860.0 C633.5 870.0 629.4 888.5 624.0 902.0 C618.6 915.5 612.0 928.2 605.0 941.0 C598.0 953.8 591.0 968.3 582.0 978.5 C573.0 988.7 562.0 996.9 551.0 1002.0 C540.0 1007.1 526.4 1010.2 516.0 1009.0 C505.6 1007.8 497.0 1002.4 488.5 995.0 C480.0 987.6 471.9 977.3 465.0 964.5 C458.1 951.7 451.7 931.2 447.0 918.0 C442.3 904.8 439.7 894.3 437.0 885.0 C434.3 875.7 432.0 865.8 431.0 862.0" fill="none" stroke="#3d5ccc" stroke-width="15.5" stroke-linejoin="round"/>
<path d="M862.0 841.0 C861.8 844.5 862.7 854.0 861.0 862.0 C859.3 870.0 857.5 880.8 852.0 889.0 C846.5 897.2 837.3 907.7 828.0 911.0 C818.7 914.3 806.7 912.0 796.0 909.0 C785.3 906.0 774.7 898.8 764.0 893.0 C753.3 887.2 742.7 880.0 732.0 874.0 C721.3 868.0 710.7 862.7 700.0 857.0 C689.3 851.3 676.7 842.5 668.0 840.0 C659.3 837.5 653.1 838.7 648.0 842.0 C642.9 845.3 641.5 850.0 637.5 860.0 C633.5 870.0 629.4 888.5 624.0 902.0 C618.6 915.5 612.0 928.2 605.0 941.0 C598.0 953.8 591.0 968.3 582.0 978.5 C573.0 988.7 562.0 996.9 551.0 1002.0 C540.0 1007.1 526.4 1010.2 516.0 1009.0 C505.6 1007.8 497.0 1002.4 488.5 995.0 C480.0 987.6 471.9 977.3 465.0 964.5 C458.1 951.7 451.7 931.2 447.0 918.0 C442.3 904.8 439.7 894.3 437.0 885.0 C434.3 875.7 432.0 865.8 431.0 862.0" fill="none" stroke="#5a7ce8" stroke-width="14.5" stroke-linejoin="round"/>
<path d="M862.0 841.0 C861.8 844.5 862.7 854.0 861.0 862.0 C859.3 870.0 857.5 880.8 852.0 889.0 C846.5 897.2 837.3 907.7 828.0 911.0 C818.7 914.3 806.7 912.0 796.0 909.0 C785.3 906.0 774.7 898.8 764.0 893.0 C753.3 887.2 742.7 880.0 732.0 874.0 C721.3 868.0 710.7 862.7 700.0 857.0 C689.3 851.3 676.7 842.5 668.0 840.0 C659.3 837.5 653.1 838.7 648.0 842.0 C642.9 845.3 641.5 850.0 637.5 860.0 C633.5 870.0 629.4 888.5 624.0 902.0 C618.6 915.5 612.0 928.2 605.0 941.0 C598.0 953.8 591.0 968.3 582.0 978.5 C573.0 988.7 562.0 996.9 551.0 1002.0 C540.0 1007.1 526.4 1010.2 516.0 1009.0 C505.6 1007.8 497.0 1002.4 488.5 995.0 C480.0 987.6 471.9 977.3 465.0 964.5 C458.1 951.7 451.7 931.2 447.0 918.0 C442.3 904.8 439.7 894.3 437.0 885.0 C434.3 875.7 432.0 865.8 431.0 862.0" fill="none" stroke="#8eaef6" stroke-width="7.2" stroke-linejoin="round" opacity="0.35" transform="translate(-1,-1)"/>
<path d="M790.0 842.0 C784.3 839.2 766.0 830.3 756.0 825.0 C746.0 819.7 736.7 813.3 730.0 810.0 C723.3 806.7 720.3 804.2 716.0 805.0 C711.7 805.8 707.0 810.0 704.0 815.0 C701.0 820.0 698.7 829.2 698.0 835.0 C697.3 840.8 700.0 842.0 700.0 850.0 C700.0 858.0 698.0 871.7 698.0 883.0 C698.0 894.3 702.3 906.7 700.0 918.0 C697.7 929.3 691.3 940.2 684.0 951.0 C676.7 961.8 666.5 974.9 656.0 983.0 C645.5 991.1 631.8 996.8 621.0 999.5 C610.2 1002.2 600.7 1002.2 591.0 999.5 C581.3 996.8 573.2 993.9 563.0 983.0 C552.8 972.1 539.3 949.8 530.0 934.0 C520.7 918.2 513.2 897.7 507.0 888.0 C500.8 878.3 498.4 877.2 493.0 876.0 C487.6 874.8 481.5 876.7 474.5 881.0 C467.5 885.3 458.8 892.0 451.0 902.0 C443.2 912.0 436.5 930.2 428.0 941.0 C419.5 951.8 408.0 959.8 400.0 967.0 C392.0 974.2 388.7 981.7 380.0 984.0 C371.3 986.3 358.7 984.7 348.0 981.0 C337.3 977.3 325.0 970.0 316.0 962.0 C307.0 954.0 299.8 945.3 294.0 933.0 C288.2 920.7 282.7 903.0 281.0 888.0 C279.3 873.0 282.4 856.8 284.0 843.0 C285.6 829.2 290.6 814.5 290.6 805.0 C290.6 795.5 290.4 789.8 284.0 786.0 C277.6 782.2 260.5 781.5 252.0 782.5 C243.5 783.5 240.5 788.8 233.0 792.0 C225.5 795.2 215.5 799.0 207.0 802.0 C198.5 805.0 191.5 807.8 182.0 810.0 C172.5 812.2 161.3 815.3 150.0 815.0 C138.7 814.7 123.7 811.8 114.0 808.0 C104.3 804.2 97.0 797.8 92.0 792.0 C87.0 786.2 85.0 778.8 84.0 773.0 C83.0 767.2 85.7 759.7 86.0 757.0" fill="none" stroke="#3d5ccc" stroke-width="15.5" stroke-linejoin="round"/>
<path d="M790.0 842.0 C784.3 839.2 766.0 830.3 756.0 825.0 C746.0 819.7 736.7 813.3 730.0 810.0 C723.3 806.7 720.3 804.2 716.0 805.0 C711.7 805.8 707.0 810.0 704.0 815.0 C701.0 820.0 698.7 829.2 698.0 835.0 C697.3 840.8 700.0 842.0 700.0 850.0 C700.0 858.0 698.0 871.7 698.0 883.0 C698.0 894.3 702.3 906.7 700.0 918.0 C697.7 929.3 691.3 940.2 684.0 951.0 C676.7 961.8 666.5 974.9 656.0 983.0 C645.5 991.1 631.8 996.8 621.0 999.5 C610.2 1002.2 600.7 1002.2 591.0 999.5 C581.3 996.8 573.2 993.9 563.0 983.0 C552.8 972.1 539.3 949.8 530.0 934.0 C520.7 918.2 513.2 897.7 507.0 888.0 C500.8 878.3 498.4 877.2 493.0 876.0 C487.6 874.8 481.5 876.7 474.5 881.0 C467.5 885.3 458.8 892.0 451.0 902.0 C443.2 912.0 436.5 930.2 428.0 941.0 C419.5 951.8 408.0 959.8 400.0 967.0 C392.0 974.2 388.7 981.7 380.0 984.0 C371.3 986.3 358.7 984.7 348.0 981.0 C337.3 977.3 325.0 970.0 316.0 962.0 C307.0 954.0 299.8 945.3 294.0 933.0 C288.2 920.7 282.7 903.0 281.0 888.0 C279.3 873.0 282.4 856.8 284.0 843.0 C285.6 829.2 290.6 814.5 290.6 805.0 C290.6 795.5 290.4 789.8 284.0 786.0 C277.6 782.2 260.5 781.5 252.0 782.5 C243.5 783.5 240.5 788.8 233.0 792.0 C225.5 795.2 215.5 799.0 207.0 802.0 C198.5 805.0 191.5 807.8 182.0 810.0 C172.5 812.2 161.3 815.3 150.0 815.0 C138.7 814.7 123.7 811.8 114.0 808.0 C104.3 804.2 97.0 797.8 92.0 792.0 C87.0 786.2 85.0 778.8 84.0 773.0 C83.0 767.2 85.7 759.7 86.0 757.0" fill="none" stroke="#5778e6" stroke-width="14.5" stroke-linejoin="round"/>
<path d="M790.0 842.0 C784.3 839.2 766.0 830.3 756.0 825.0 C746.0 819.7 736.7 813.3 730.0 810.0 C723.3 806.7 720.3 804.2 716.0 805.0 C711.7 805.8 707.0 810.0 704.0 815.0 C701.0 820.0 698.7 829.2 698.0 835.0 C697.3 840.8 700.0 842.0 700.0 850.0 C700.0 858.0 698.0 871.7 698.0 883.0 C698.0 894.3 702.3 906.7 700.0 918.0 C697.7 929.3 691.3 940.2 684.0 951.0 C676.7 961.8 666.5 974.9 656.0 983.0 C645.5 991.1 631.8 996.8 621.0 999.5 C610.2 1002.2 600.7 1002.2 591.0 999.5 C581.3 996.8 573.2 993.9 563.0 983.0 C552.8 972.1 539.3 949.8 530.0 934.0 C520.7 918.2 513.2 897.7 507.0 888.0 C500.8 878.3 498.4 877.2 493.0 876.0 C487.6 874.8 481.5 876.7 474.5 881.0 C467.5 885.3 458.8 892.0 451.0 902.0 C443.2 912.0 436.5 930.2 428.0 941.0 C419.5 951.8 408.0 959.8 400.0 967.0 C392.0 974.2 388.7 981.7 380.0 984.0 C371.3 986.3 358.7 984.7 348.0 981.0 C337.3 977.3 325.0 970.0 316.0 962.0 C307.0 954.0 299.8 945.3 294.0 933.0 C288.2 920.7 282.7 903.0 281.0 888.0 C279.3 873.0 282.4 856.8 284.0 843.0 C285.6 829.2 290.6 814.5 290.6 805.0 C290.6 795.5 290.4 789.8 284.0 786.0 C277.6 782.2 260.5 781.5 252.0 782.5 C243.5 783.5 240.5 788.8 233.0 792.0 C225.5 795.2 215.5 799.0 207.0 802.0 C198.5 805.0 191.5 807.8 182.0 810.0 C172.5 812.2 161.3 815.3 150.0 815.0 C138.7 814.7 123.7 811.8 114.0 808.0 C104.3 804.2 97.0 797.8 92.0 792.0 C87.0 786.2 85.0 778.8 84.0 773.0 C83.0 767.2 85.7 759.7 86.0 757.0" fill="none" stroke="#86a6f4" stroke-width="7.2" stroke-linejoin="round" opacity="0.35" transform="translate(-1,-1)"/>
<path d="M861.0 862.0 C859.5 866.5 857.5 880.8 852.0 889.0 C846.5 897.2 837.3 907.7 828.0 911.0 C818.7 914.3 806.7 912.0 796.0 909.0 C785.3 906.0 774.7 898.8 764.0 893.0 C753.3 887.2 741.8 879.5 732.0 874.0 C722.2 868.5 709.5 862.3 705.0 860.0" fill="none" stroke="#76a0ee" stroke-width="13.5" stroke-linejoin="round"/>
<path d="M861.0 862.0 C859.5 866.5 857.5 880.8 852.0 889.0 C846.5 897.2 837.3 907.7 828.0 911.0 C818.7 914.3 806.7 912.0 796.0 909.0 C785.3 906.0 774.7 898.8 764.0 893.0 C753.3 887.2 741.8 879.5 732.0 874.0 C722.2 868.5 709.5 862.3 705.0 860.0" fill="none" stroke="#a0c0f6" stroke-width="6.8" stroke-linejoin="round" opacity="0.35" transform="translate(-1,-1)"/>
<path d="M716.0 805.0 C718.3 805.8 723.3 806.7 730.0 810.0 C736.7 813.3 746.0 819.7 756.0 825.0 C766.0 830.3 784.3 839.2 790.0 842.0" fill="none" stroke="#78a2ee" stroke-width="13" stroke-linejoin="round"/>
<path d="M716.0 805.0 C718.3 805.8 723.3 806.7 730.0 810.0 C736.7 813.3 746.0 819.7 756.0 825.0 C766.0 830.3 784.3 839.2 790.0 842.0" fill="none" stroke="#a0c0f6" stroke-width="6.5" stroke-linejoin="round" opacity="0.35" transform="translate(-1,-1)"/>
<path d="M84.0 773.0 C85.3 776.2 87.0 786.2 92.0 792.0 C97.0 797.8 104.3 804.2 114.0 808.0 C123.7 811.8 138.7 814.7 150.0 815.0 C161.3 815.3 176.7 810.8 182.0 810.0" fill="none" stroke="#6f94dc" stroke-width="12" stroke-linejoin="round"/>
<path d="M84.0 773.0 C85.3 776.2 87.0 786.2 92.0 792.0 C97.0 797.8 104.3 804.2 114.0 808.0 C123.7 811.8 138.7 814.7 150.0 815.0 C161.3 815.3 176.7 810.8 182.0 810.0" fill="none" stroke="#9cbcec" stroke-width="6.0" stroke-linejoin="round" opacity="0.35" transform="translate(-1,-1)"/>
<path d="M85.6 705.7 L98.4 712.0 L92.0 757.0 L80.5 751.0Z" fill="#e2e27a"/>
<path d="M847.0 790.0 L862.0 789.0 L863.0 842.0 L850.0 842.0Z" fill="#eef07a"/>
<path d="M830.0 812.0 L836.0 808.0 L848.0 826.0 L842.0 832.0Z" fill="#c8c860"/>
<path d="M120.0 740.0 L135.0 733.0 L147.0 727.0 L152.0 730.0 L140.0 740.0Z" fill="#c8c860"/>
<path d="M324.0 612.0 C323.3 617.5 318.3 635.7 320.0 645.0 C321.7 654.3 327.3 660.5 334.0 668.0 C340.7 675.5 349.8 684.7 360.0 690.0 C370.2 695.3 389.2 698.3 395.0 700.0" fill="none" stroke="#4466e0" stroke-width="4.2" stroke-linecap="round" stroke-linejoin="round" />
<path d="M294.0 684.0 C292.3 680.0 283.0 668.0 284.0 660.0 C285.0 652.0 297.3 640.0 300.0 636.0" fill="none" stroke="#4466e0" stroke-width="4.2" stroke-linecap="round" stroke-linejoin="round" />
<path d="M310.0 700.0 L294.0 684.0" fill="none" stroke="#4466e0" stroke-width="4.2" stroke-linecap="round" stroke-linejoin="round" />
<path d="M395.0 700.0 C400.8 698.3 420.8 690.0 430.0 690.0 C439.2 690.0 443.3 700.0 450.0 700.0 C456.7 700.0 466.7 691.7 470.0 690.0" fill="none" stroke="#4466e0" stroke-width="4.2" stroke-linecap="round" stroke-linejoin="round" />
<path d="M335.0 690.0 C339.2 687.5 351.7 675.0 360.0 675.0 C368.3 675.0 377.5 683.3 385.0 690.0 C392.5 696.7 401.7 710.8 405.0 715.0" fill="none" stroke="#4466e0" stroke-width="4.2" stroke-linecap="round" stroke-linejoin="round" />
<path d="M370.0 610.0 C365.8 613.3 348.3 618.3 345.0 630.0 C341.7 641.7 344.2 668.3 350.0 680.0 C355.8 691.7 368.3 695.8 380.0 700.0 C391.7 704.2 413.3 704.2 420.0 705.0" fill="none" stroke="#4466e0" stroke-width="4.2" stroke-linecap="round" stroke-linejoin="round" />
<path d="M420.0 610.0 C417.5 615.0 405.0 630.0 405.0 640.0 C405.0 650.0 412.5 663.3 420.0 670.0 C427.5 676.7 441.7 680.0 450.0 680.0 C458.3 680.0 466.7 671.7 470.0 670.0" fill="none" stroke="#4466e0" stroke-width="4.2" stroke-linecap="round" stroke-linejoin="round" />
<path d="M380.0 645.0 C383.3 642.5 391.7 630.8 400.0 630.0 C408.3 629.2 423.3 635.0 430.0 640.0 C436.7 645.0 438.3 656.7 440.0 660.0" fill="none" stroke="#4466e0" stroke-width="4.2" stroke-linecap="round" stroke-linejoin="round" />
<path d="M430.0 560.0 C434.2 566.7 453.3 588.3 455.0 600.0 C456.7 611.7 445.0 623.3 440.0 630.0 C435.0 636.7 427.5 638.3 425.0 640.0" fill="none" stroke="#4466e0" stroke-width="4.2" stroke-linecap="round" stroke-linejoin="round" />
<path d="M677.0 680.0 C678.0 684.0 685.5 695.8 683.0 704.0 C680.5 712.2 669.2 722.2 662.0 729.0 C654.8 735.8 648.7 739.8 640.0 745.0 C631.3 750.2 615.0 757.5 610.0 760.0" fill="none" stroke="#4466e0" stroke-width="4.2" stroke-linecap="round" stroke-linejoin="round" />
<path d="M692.0 690.0 C692.7 692.7 696.0 699.5 696.0 706.0 C696.0 712.5 697.7 721.0 692.0 729.0 C686.3 737.0 667.0 749.8 662.0 754.0" fill="none" stroke="#4466e0" stroke-width="4.2" stroke-linecap="round" stroke-linejoin="round" />
<path d="M597.0 602.0 C594.2 605.0 583.7 610.3 580.0 620.0 C576.3 629.7 573.3 648.3 575.0 660.0 C576.7 671.7 585.8 680.0 590.0 690.0 C594.2 700.0 598.3 715.0 600.0 720.0" fill="none" stroke="#4466e0" stroke-width="4.2" stroke-linecap="round" stroke-linejoin="round" />
<path d="M640.0 640.0 C642.5 644.2 654.2 656.7 655.0 665.0 C655.8 673.3 650.8 684.2 645.0 690.0 C639.2 695.8 627.5 700.0 620.0 700.0 C612.5 700.0 603.3 691.7 600.0 690.0" fill="none" stroke="#4466e0" stroke-width="4.2" stroke-linecap="round" stroke-linejoin="round" />
<path d="M580.0 700.0 C585.0 703.3 600.0 714.2 610.0 720.0 C620.0 725.8 631.7 734.2 640.0 735.0 C648.3 735.8 656.7 726.7 660.0 725.0" fill="none" stroke="#4466e0" stroke-width="4.2" stroke-linecap="round" stroke-linejoin="round" />
<path d="M520.0 690.0 C525.8 690.0 545.8 688.3 555.0 690.0 C564.2 691.7 567.5 693.3 575.0 700.0 C582.5 706.7 591.7 720.0 600.0 730.0 C608.3 740.0 620.8 755.0 625.0 760.0" fill="none" stroke="#4466e0" stroke-width="4.2" stroke-linecap="round" stroke-linejoin="round" />
<path d="M600.0 770.0 C606.7 768.3 631.7 756.7 640.0 760.0 C648.3 763.3 651.7 781.7 650.0 790.0 C648.3 798.3 636.7 805.0 630.0 810.0 C623.3 815.0 613.3 818.3 610.0 820.0" fill="none" stroke="#4466e0" stroke-width="4.2" stroke-linecap="round" stroke-linejoin="round" />
<path d="M520.0 770.0 C523.3 775.0 531.7 794.2 540.0 800.0 C548.3 805.8 560.0 806.7 570.0 805.0 C580.0 803.3 595.0 792.5 600.0 790.0" fill="none" stroke="#4466e0" stroke-width="4.2" stroke-linecap="round" stroke-linejoin="round" />
<path d="M420.0 780.0 C424.2 783.3 436.7 791.7 445.0 800.0 C453.3 808.3 460.8 826.7 470.0 830.0 C479.2 833.3 491.7 826.7 500.0 820.0 C508.3 813.3 516.7 795.0 520.0 790.0" fill="none" stroke="#4466e0" stroke-width="4.2" stroke-linecap="round" stroke-linejoin="round" />
<path d="M355.0 795.0 C360.8 794.2 380.8 788.3 390.0 790.0 C399.2 791.7 405.0 798.3 410.0 805.0 C415.0 811.7 418.3 825.8 420.0 830.0" fill="none" stroke="#4466e0" stroke-width="4.2" stroke-linecap="round" stroke-linejoin="round" />
<path d="M440.0 720.0 C445.0 723.3 458.3 736.7 470.0 740.0 C481.7 743.3 498.3 743.3 510.0 740.0 C521.7 736.7 535.0 723.3 540.0 720.0" fill="none" stroke="#4466e0" stroke-width="4.2" stroke-linecap="round" stroke-linejoin="round" />
<path d="M398.0 535.0 C400.0 539.2 404.7 553.3 410.0 560.0 C415.3 566.7 422.5 573.3 430.0 575.0 C437.5 576.7 450.8 570.8 455.0 570.0" fill="none" stroke="#6f94e0" stroke-width="4" stroke-linecap="round" stroke-linejoin="round" />
<path d="M560.0 580.0 C565.0 581.7 580.8 586.7 590.0 590.0 C599.2 593.3 610.8 598.3 615.0 600.0" fill="none" stroke="#6f94e0" stroke-width="4" stroke-linecap="round" stroke-linejoin="round" />
<path d="M650.0 500.0 C651.7 506.7 656.7 528.3 660.0 540.0 C663.3 551.7 668.3 565.0 670.0 570.0" fill="none" stroke="#6f94e0" stroke-width="4" stroke-linecap="round" stroke-linejoin="round" />
<path d="M300.0 720.0 C305.0 726.7 326.7 748.3 330.0 760.0 C333.3 771.7 321.7 785.0 320.0 790.0" fill="none" stroke="#6f94e0" stroke-width="4" stroke-linecap="round" stroke-linejoin="round" />
<path d="M585.0 760.0 C589.2 757.5 600.8 745.0 610.0 745.0 C619.2 745.0 633.3 752.5 640.0 760.0 C646.7 767.5 651.7 780.0 650.0 790.0 C648.3 800.0 633.3 815.0 630.0 820.0" fill="none" stroke="#6f94e0" stroke-width="4" stroke-linecap="round" stroke-linejoin="round" />
<path d="M540.0 570.0 C543.3 575.0 557.5 588.3 560.0 600.0 C562.5 611.7 555.8 633.3 555.0 640.0" fill="none" stroke="#6f94e0" stroke-width="4" stroke-linecap="round" stroke-linejoin="round" />
<path d="M450.0 640.0 C453.3 643.3 463.3 658.3 470.0 660.0 C476.7 661.7 486.7 651.7 490.0 650.0" fill="none" stroke="#6f94e0" stroke-width="4" stroke-linecap="round" stroke-linejoin="round" />
<path d="M445.0 620.0 C446.7 628.3 454.2 653.3 455.0 670.0 C455.8 686.7 450.8 711.7 450.0 720.0" fill="none" stroke="#a8b8a0" stroke-width="3.5" stroke-linecap="round" stroke-linejoin="round" />
<path d="M540.0 640.0 C543.3 648.3 560.0 676.7 560.0 690.0 C560.0 703.3 546.7 713.3 540.0 720.0 C533.3 726.7 523.3 728.3 520.0 730.0" fill="none" stroke="#a8b8a0" stroke-width="3.5" stroke-linecap="round" stroke-linejoin="round" />
<path d="M520.0 690.0 C523.3 695.0 534.2 708.3 540.0 720.0 C545.8 731.7 552.5 753.3 555.0 760.0" fill="none" stroke="#a8b8a0" stroke-width="3.5" stroke-linecap="round" stroke-linejoin="round" />
<path d="M460.0 660.0 C463.3 665.0 473.3 683.3 480.0 690.0 C486.7 696.7 496.7 698.3 500.0 700.0" fill="none" stroke="#a8b8a0" stroke-width="3.5" stroke-linecap="round" stroke-linejoin="round" />
<path d="M457.0 690.0 L453.5 696.1 L446.5 696.1 L443.0 690.0 L446.5 683.9 L453.5 683.9Z" fill="none" stroke="#5070e0" stroke-width="2"/>
<path d="M512.0 725.0 L508.5 731.1 L501.5 731.1 L498.0 725.0 L501.5 718.9 L508.5 718.9Z" fill="none" stroke="#5070e0" stroke-width="2"/>
<path d="M592.0 612.0 L588.5 618.1 L581.5 618.1 L578.0 612.0 L581.5 605.9 L588.5 605.9Z" fill="none" stroke="#5070e0" stroke-width="2"/>
<path d="M362.0 533.0 C358.3 538.3 346.7 553.8 340.0 565.0 C333.3 576.2 328.0 587.8 322.0 600.0 C316.0 612.2 307.0 631.7 304.0 638.0" fill="none" stroke="#3a58d8" stroke-width="12" stroke-linejoin="round"/>
<path d="M362.0 533.0 C358.3 538.3 346.7 553.8 340.0 565.0 C333.3 576.2 328.0 587.8 322.0 600.0 C316.0 612.2 307.0 631.7 304.0 638.0" fill="none" stroke="#5c7cec" stroke-width="5.4" stroke-linejoin="round" opacity="0.6" transform="translate(-1.5,-0.5)"/>
<path d="M324.0 533.0 C322.3 540.0 317.0 562.2 314.0 575.0 C311.0 587.8 308.5 599.8 306.0 610.0 C303.5 620.2 300.2 631.7 299.0 636.0" fill="none" stroke="#4f72e6" stroke-width="13" stroke-linejoin="round"/>
<path d="M324.0 533.0 C322.3 540.0 317.0 562.2 314.0 575.0 C311.0 587.8 308.5 599.8 306.0 610.0 C303.5 620.2 300.2 631.7 299.0 636.0" fill="none" stroke="#7fa0f0" stroke-width="5.9" stroke-linejoin="round" opacity="0.6" transform="translate(-1.5,-0.5)"/>
<path d="M398.0 535.0 C392.7 538.2 375.8 546.0 366.0 554.0 C356.2 562.0 347.0 573.3 339.0 583.0 C331.0 592.7 323.3 602.8 318.0 612.0 C312.7 621.2 308.8 633.7 307.0 638.0" fill="none" stroke="#4a6ce6" stroke-width="13" stroke-linejoin="round"/>
<path d="M398.0 535.0 C392.7 538.2 375.8 546.0 366.0 554.0 C356.2 562.0 347.0 573.3 339.0 583.0 C331.0 592.7 323.3 602.8 318.0 612.0 C312.7 621.2 308.8 633.7 307.0 638.0" fill="none" stroke="#6f92f0" stroke-width="5.9" stroke-linejoin="round" opacity="0.6" transform="translate(-1.5,-0.5)"/>
<path d="M408.0 570.0 C403.3 574.2 388.0 588.5 380.0 595.0 C372.0 601.5 368.2 606.2 360.0 609.0 C351.8 611.8 335.8 611.5 331.0 612.0" fill="none" stroke="#4262e4" stroke-width="12" stroke-linejoin="round"/>
<path d="M408.0 570.0 C403.3 574.2 388.0 588.5 380.0 595.0 C372.0 601.5 368.2 606.2 360.0 609.0 C351.8 611.8 335.8 611.5 331.0 612.0" fill="none" stroke="#6384f0" stroke-width="5.4" stroke-linejoin="round" opacity="0.6" transform="translate(-1.5,-0.5)"/>
<path d="M318.0 527.0 L331.0 533.0 L322.0 548.0 L316.0 545.0Z" fill="#5a80e8"/>
<path d="M684.0 578.0 C684.7 585.0 687.0 606.3 688.0 620.0 C689.0 633.7 689.6 651.1 690.0 660.0 C690.4 668.9 690.4 671.0 690.4 673.2" fill="none" stroke="#5074e4" stroke-width="14" stroke-linejoin="round"/>
<path d="M684.0 578.0 C684.7 585.0 687.0 606.3 688.0 620.0 C689.0 633.7 689.6 651.1 690.0 660.0 C690.4 668.9 690.4 671.0 690.4 673.2" fill="none" stroke="#7a9cf0" stroke-width="6.3" stroke-linejoin="round" opacity="0.6" transform="translate(-1.5,-0.5)"/>
<path d="M679.9 673.6 L691.0 690.0 L700.9 672.9Z" fill="#5074e4"/>
<path d="M614.0 560.0 C618.3 566.7 632.3 586.7 640.0 600.0 C647.7 613.3 654.0 626.7 660.0 640.0 C666.0 653.3 673.3 673.3 676.0 680.0" fill="none" stroke="#3654d8" stroke-width="18" stroke-linejoin="round"/>
<path d="M614.0 560.0 C618.3 566.7 632.3 586.7 640.0 600.0 C647.7 613.3 654.0 626.7 660.0 640.0 C666.0 653.3 673.3 673.3 676.0 680.0" fill="none" stroke="#5a78e8" stroke-width="8.1" stroke-linejoin="round" opacity="0.6" transform="translate(-1.5,-0.5)"/>
<path d="M598.0 602.0 C602.5 605.8 616.7 618.3 625.0 625.0 C633.3 631.7 644.2 639.2 648.0 642.0" fill="none" stroke="#4262e0" stroke-width="11" stroke-linejoin="round"/>
<path d="M670.0 675.0 L684.0 677.0 L676.0 690.0Z" fill="#3654d8"/>
<path d="M319.5 735.1 L316.5 739.0 L313.9 741.9 L312.0 743.7 L310.9 744.1 L310.9 743.4 L311.9 741.6 L314.1 738.9 L317.3 735.6 L321.4 731.8 L326.1 728.0 L331.4 724.4 L336.8 721.4 L342.1 719.1 L347.0 717.9 L351.3 717.8 L354.8 719.0 L357.3 721.3 L358.7 724.8 L359.0 729.3 L358.3 734.5 L356.6 740.1 L354.2 745.8 L351.3 751.5 L348.1 756.6 L345.0 761.0 L342.2 764.4 L339.9 766.7 L338.4 767.8 L337.9 767.6 L338.4 766.3 L340.0 764.0 L342.8 760.9 L346.4 757.3 L350.9 753.5 L355.9 749.8 L361.3 746.4 L366.7 743.8 L371.8 742.0 L376.5 741.4 L380.4 742.0 L383.4 743.8 L385.3 746.7 L386.1 750.7 L385.9 755.6 L384.7 761.0 L382.6 766.8 L379.9 772.5 L376.8 777.9 L373.6 782.7 L370.6 786.6 L368.0 789.4 L366.1 791.1 L365.1 791.5 L365.1 790.8 L366.2 788.9 L368.4 786.2 L371.7 782.8 L375.8 779.0 L380.6 775.2 L385.8 771.6 L391.2 768.6 L396.5 766.4 L401.4 765.2 L405.7 765.2 L409.2 766.4 L411.6 768.9 L413.0 772.4 L413.2 776.9 L412.5 782.1 L410.8 787.7 L408.3 793.5 L405.4 799.1 L402.2 804.2 L399.1 808.5 L396.3 811.9 L394.0 814.1 L392.6 815.2 L392.1 814.9 L392.7 813.6 L394.4 811.3 L397.1 808.1 L400.8 804.5 L405.3 800.7 L410.4 797.0 L415.8 793.7 L421.1 791.0 L426.3 789.4 L430.9 788.8 L434.8 789.4 L437.7 791.2 L439.6 794.3 L440.4 798.3 L440.1 803.2" fill="none" stroke="#2a48d8" stroke-width="8.4" stroke-linejoin="round"/>
<path d="M310.9 743.4 L311.9 741.6 L314.1 738.9 L317.3 735.6 L321.4 731.8 L326.1 728.0 L331.4 724.4 L336.8 721.4 L342.1 719.1 L347.0 717.9 L351.3 717.8 L354.8 719.0" fill="none" stroke="#4064f0" stroke-width="15.0" stroke-linejoin="round" stroke-linecap="butt"/>
<path d="M337.9 767.6 L338.4 766.3 L340.0 764.0 L342.8 760.9 L346.4 757.3 L350.9 753.5 L355.9 749.8 L361.3 746.4 L366.7 743.8 L371.8 742.0 L376.5 741.4 L380.4 742.0" fill="none" stroke="#4064f0" stroke-width="15.0" stroke-linejoin="round" stroke-linecap="butt"/>
<path d="M365.1 790.8 L366.2 788.9 L368.4 786.2 L371.7 782.8 L375.8 779.0 L380.6 775.2 L385.8 771.6 L391.2 768.6 L396.5 766.4 L401.4 765.2 L405.7 765.2 L409.2 766.4" fill="none" stroke="#4064f0" stroke-width="15.0" stroke-linejoin="round" stroke-linecap="butt"/>
<path d="M392.1 814.9 L392.7 813.6 L394.4 811.3 L397.1 808.1 L400.8 804.5 L405.3 800.7 L410.4 797.0 L415.8 793.7 L421.1 791.0 L426.3 789.4 L430.9 788.8 L434.8 789.4" fill="none" stroke="#4064f0" stroke-width="15.0" stroke-linejoin="round" stroke-linecap="butt"/>
<path d="M544.5 710.4 L540.9 714.9 L537.3 718.8 L534.0 721.9 L531.3 724.1 L529.4 725.4 L528.5 725.6 L528.7 724.9 L530.0 723.4 L532.5 721.3 L536.0 718.7 L540.4 715.9 L545.3 713.2 L550.7 710.8 L556.0 708.9 L561.2 707.8 L565.8 707.5 L569.7 708.2 L572.6 709.9 L574.4 712.6 L575.0 716.1 L574.5 720.3 L573.0 725.0 L570.6 729.9 L567.5 734.8 L564.0 739.4 L560.4 743.6 L556.9 747.0 L554.0 749.6 L551.7 751.2 L550.4 751.8 L550.2 751.5 L551.1 750.3 L553.1 748.4 L556.2 745.9 L560.3 743.2 L565.0 740.4 L570.3 737.8 L575.6 735.7 L580.9 734.3 L585.8 733.7 L590.0 734.0 L593.2 735.4 L595.5 737.7 L596.6 740.9 L596.5 744.8 L595.4 749.3 L593.3 754.2 L590.4 759.1 L587.0 763.9 L583.4 768.2 L579.9 771.9 L576.7 774.9 L574.2 776.9 L572.5 777.9 L571.8 777.9 L572.3 777.0 L573.9 775.4 L576.6 773.1 L580.3 770.4 L584.8 767.6 L589.9 765.0 L595.2 762.7 L600.6 761.0 L605.6 760.0 L610.1 760.0 L613.8 760.9 L616.4 762.8 L618.0 765.7 L618.4 769.4 L617.6 773.7 L615.9 778.5 L613.3 783.4 L610.1 788.2 L606.5 792.8 L602.9 796.8 L599.6 800.0 L596.7 802.4 L594.7 803.8 L593.6 804.2 L593.6 803.7 L594.8 802.3" fill="none" stroke="#2a48d8" stroke-width="8.4" stroke-linejoin="round"/>
<path d="M528.7 724.9 L530.0 723.4 L532.5 721.3 L536.0 718.7 L540.4 715.9 L545.3 713.2 L550.7 710.8 L556.0 708.9 L561.2 707.8 L565.8 707.5 L569.7 708.2 L572.6 709.9" fill="none" stroke="#4064f0" stroke-width="15.0" stroke-linejoin="round" stroke-linecap="butt"/>
<path d="M550.2 751.5 L551.1 750.3 L553.1 748.4 L556.2 745.9 L560.3 743.2 L565.0 740.4 L570.3 737.8 L575.6 735.7 L580.9 734.3 L585.8 733.7 L590.0 734.0 L593.2 735.4" fill="none" stroke="#4064f0" stroke-width="15.0" stroke-linejoin="round" stroke-linecap="butt"/>
<path d="M571.8 777.9 L572.3 777.0 L573.9 775.4 L576.6 773.1 L580.3 770.4 L584.8 767.6 L589.9 765.0 L595.2 762.7 L600.6 761.0 L605.6 760.0 L610.1 760.0 L613.8 760.9 L616.4 762.8" fill="none" stroke="#4064f0" stroke-width="15.0" stroke-linejoin="round" stroke-linecap="butt"/>
<path d="M593.6 803.7 L594.8 802.3" fill="none" stroke="#4064f0" stroke-width="15.0" stroke-linejoin="round" stroke-linecap="butt"/>
<path d="M447.5 663.0 L444.1 662.4 L442.6 661.5 L443.0 660.2 L445.4 658.9 L449.5 657.6 L455.2 656.6 L462.0 656.0 L469.6 655.9 L477.4 656.4 L484.9 657.5 L491.7 659.3 L497.3 661.8 L501.3 664.8 L503.5 668.2 L503.8 671.9 L502.1 675.8 L498.6 679.6 L493.5 683.2 L487.2 686.5 L480.0 689.2 L472.5 691.4 L465.2 692.9 L458.5 693.7 L452.9 693.9 L448.9 693.5 L446.5 692.7 L446.1 691.6 L447.7 690.2 L451.1 688.9 L456.2 687.8 L462.6 687.0 L469.9 686.6 L477.6 686.9 L485.3 687.8 L492.5 689.3 L498.6 691.5 L503.3 694.3 L506.3 697.5 L507.4 701.2 L506.6 705.0 L503.8 708.8 L499.4 712.5 L493.5 716.0 L486.6 718.9 L479.2 721.3 L471.7 723.1 L464.7 724.2 L458.6 724.7 L453.9 724.6 L450.8 723.9 L449.6 722.9 L450.3 721.6 L453.0 720.3 L457.4 719.0 L463.3 718.1 L470.2 717.5 L477.9 717.5 L485.7 718.1 L493.1 719.4 L499.7 721.3 L505.1 723.8 L508.8 726.9 L510.7 730.4 L510.7 734.2 L508.7 738.0 L505.0 741.8 L499.6 745.4 L493.1 748.5 L485.9 751.2 L478.4 753.2 L471.1 754.6 L464.6 755.4 L459.2 755.5 L455.4 755.0 L453.4 754.1 L453.3 753.0 L455.1 751.6 L458.8 750.3 L464.2 749.2 L470.7 748.5 L478.1 748.2 L485.9 748.6 L493.6 749.6 L500.6 751.2 L506.5 753.5 L511.0 756.4 L513.7 759.7 L514.5 763.4 L513.3 767.2 L510.3 771.0 L505.6 774.7 L499.5 778.1 L492.5 780.9 L485.0 783.3 L477.6 784.9 L470.7 786.0 L464.8 786.3 L460.3 786.1 L457.5 785.4 L456.6 784.3 L457.6 783.0 L460.6 781.7 L465.3 780.5 L471.4 779.5 L478.5 779.1 L486.2 779.2 L493.9 779.9 L501.3 781.2 L507.7 783.3 L512.8 785.9 L516.3 789.1" fill="none" stroke="#2c4ae0" stroke-width="8.4" stroke-linejoin="round"/>
<path d="M443.0 660.2 L445.4 658.9 L449.5 657.6 L455.2 656.6 L462.0 656.0 L469.6 655.9 L477.4 656.4 L484.9 657.5 L491.7 659.3 L497.3 661.8 L501.3 664.8 L503.5 668.2" fill="none" stroke="#4668f4" stroke-width="15.0" stroke-linejoin="round" stroke-linecap="butt"/>
<path d="M446.1 691.6 L447.7 690.2 L451.1 688.9 L456.2 687.8 L462.6 687.0 L469.9 686.6 L477.6 686.9 L485.3 687.8 L492.5 689.3 L498.6 691.5 L503.3 694.3 L506.3 697.5" fill="none" stroke="#4668f4" stroke-width="15.0" stroke-linejoin="round" stroke-linecap="butt"/>
<path d="M450.3 721.6 L453.0 720.3 L457.4 719.0 L463.3 718.1 L470.2 717.5 L477.9 717.5 L485.7 718.1 L493.1 719.4 L499.7 721.3 L505.1 723.8 L508.8 726.9 L510.7 730.4" fill="none" stroke="#4668f4" stroke-width="15.0" stroke-linejoin="round" stroke-linecap="butt"/>
<path d="M453.3 753.0 L455.1 751.6 L458.8 750.3 L464.2 749.2 L470.7 748.5 L478.1 748.2 L485.9 748.6 L493.6 749.6 L500.6 751.2 L506.5 753.5 L511.0 756.4 L513.7 759.7" fill="none" stroke="#4668f4" stroke-width="15.0" stroke-linejoin="round" stroke-linecap="butt"/>
<path d="M456.6 784.3 L457.6 783.0 L460.6 781.7 L465.3 780.5 L471.4 779.5 L478.5 779.1 L486.2 779.2 L493.9 779.9 L501.3 781.2 L507.7 783.3 L512.8 785.9 L516.3 789.1" fill="none" stroke="#4668f4" stroke-width="15.0" stroke-linejoin="round" stroke-linecap="butt"/>
<path d="M341.4 876.4 L344.7 880.9 L346.9 885.8 L347.9 890.7 L347.6 895.2 L346.2 899.0 L343.7 901.8 L340.3 903.5 L336.3 903.8 L332.0 902.8 L327.7 900.4 L323.7 896.9 L320.3 892.5 L317.7 887.4 L316.3 881.9 L316.0 876.3 L316.9 871.2 L319.1 866.6 L322.3 863.0 L326.4 860.6 L331.2 859.5 L336.4 859.7 L341.6 861.2 L346.5 863.9 L350.9 867.6 L354.5 872.1 L356.9 876.9 L358.3 881.8 L358.4 886.5 L357.2 890.5 L355.0 893.6 L351.8 895.5 L348.0 896.2 L343.7 895.6 L339.4 893.6 L335.2 890.4 L331.7 886.2 L328.9 881.2 L327.1 875.7 L326.5 870.2 L327.1 864.9 L328.9 860.1 L331.9 856.3 L335.8 853.5 L340.5 852.0 L345.6 851.9 L350.8 853.1 L355.8 855.5 L360.4 859.0 L364.2 863.3 L366.9 868.0 L368.6 873.0 L369.0 877.7 L368.2 881.9 L366.2 885.3 L363.3 887.5 L359.6 888.6 L355.4 888.3 L351.1 886.6 L346.8 883.7 L343.1 879.8 L340.1 874.9 L338.0 869.6 L337.1 864.0 L337.4 858.6 L338.9 853.7 L341.6 849.6 L345.2 846.5 L349.7 844.7 L354.7 844.2 L360.0 845.0 L365.1 847.2 L369.8 850.4 L373.8 854.5 L376.9 859.1 L378.8 864.1 L379.6 868.9 L379.1 873.2 L377.4 876.9 L374.7 879.5 L371.2 880.8 L367.1 880.9 L362.8 879.6 L358.5 877.0 L354.6 873.3 L351.3 868.7 L349.0 863.5 L347.7 857.9 L347.7 852.4 L348.9 847.4 L351.3 843.0 L354.7 839.6 L359.0 837.5 L363.9 836.6 L369.1 837.1 L374.3 838.9 L379.1 841.8 L383.4 845.7 L386.7 850.3 L389.0 855.2 L390.0 860.0 L389.9 864.6 L388.5 868.4 L386.1 871.3 L382.7 873.0 L378.8 873.4 L374.5 872.5 L370.1 870.2 L366.1 866.8 L362.7 862.4 L360.1 857.3 L358.5 851.8 L358.1 846.3 L359.0 841.1 L361.1 836.5 L364.3 832.8" fill="none" stroke="#3a58d8" stroke-width="2.5" stroke-linejoin="round"/>
<path d="M340.3 903.5 L336.3 903.8 L332.0 902.8 L327.7 900.4 L323.7 896.9 L320.3 892.5 L317.7 887.4 L316.3 881.9 L316.0 876.3 L316.9 871.2 L319.1 866.6 L322.3 863.0" fill="none" stroke="#5878e8" stroke-width="4.5" stroke-linejoin="round" stroke-linecap="butt"/>
<path d="M351.8 895.5 L348.0 896.2 L343.7 895.6 L339.4 893.6 L335.2 890.4 L331.7 886.2 L328.9 881.2 L327.1 875.7 L326.5 870.2 L327.1 864.9 L328.9 860.1 L331.9 856.3" fill="none" stroke="#5878e8" stroke-width="4.5" stroke-linejoin="round" stroke-linecap="butt"/>
<path d="M363.3 887.5 L359.6 888.6 L355.4 888.3 L351.1 886.6 L346.8 883.7 L343.1 879.8 L340.1 874.9 L338.0 869.6 L337.1 864.0 L337.4 858.6 L338.9 853.7 L341.6 849.6" fill="none" stroke="#5878e8" stroke-width="4.5" stroke-linejoin="round" stroke-linecap="butt"/>
<path d="M374.7 879.5 L371.2 880.8 L367.1 880.9 L362.8 879.6 L358.5 877.0 L354.6 873.3 L351.3 868.7 L349.0 863.5 L347.7 857.9 L347.7 852.4 L348.9 847.4 L351.3 843.0" fill="none" stroke="#5878e8" stroke-width="4.5" stroke-linejoin="round" stroke-linecap="butt"/>
<path d="M382.7 873.0 L378.8 873.4 L374.5 872.5 L370.1 870.2 L366.1 866.8 L362.7 862.4 L360.1 857.3 L358.5 851.8 L358.1 846.3 L359.0 841.1 L361.1 836.5 L364.3 832.8" fill="none" stroke="#5878e8" stroke-width="4.5" stroke-linejoin="round" stroke-linecap="butt"/>
<path d="M570.0 873.3 L573.0 878.1 L574.8 883.1 L575.5 888.0 L575.0 892.4 L573.3 896.1 L570.7 898.8 L567.3 900.2 L563.4 900.4 L559.2 899.2 L555.0 896.7 L551.3 893.0 L548.1 888.5 L545.9 883.2 L544.6 877.7 L544.6 872.2 L545.7 867.1 L548.0 862.6 L551.3 859.1 L555.5 856.8 L560.2 855.8 L565.3 856.1 L570.4 857.8 L575.1 860.6 L579.4 864.4 L582.7 868.9 L585.1 873.8 L586.4 878.8 L586.4 883.5 L585.3 887.6 L583.1 890.8 L580.1 892.8 L576.3 893.6 L572.2 893.1 L568.0 891.2 L564.0 888.0 L560.6 883.9 L557.9 878.9 L556.1 873.5 L555.5 868.0 L556.1 862.6 L557.8 857.8 L560.7 853.8 L564.5 850.9 L569.0 849.3 L573.9 848.9 L579.0 850.0 L584.0 852.3 L588.5 855.6 L592.3 859.9 L595.2 864.6 L597.0 869.6 L597.6 874.5 L597.0 878.9 L595.3 882.6 L592.7 885.2 L589.2 886.6 L585.3 886.7 L581.1 885.4 L576.9 882.8 L573.2 879.1 L570.1 874.5 L567.9 869.3 L566.7 863.8 L566.7 858.3 L567.9 853.2 L570.3 848.7 L573.6 845.3 L577.8 843.0 L582.6 842.1 L587.6 842.5 L592.7 844.2 L597.5 847.1 L601.6 850.9 L605.0 855.5 L607.3 860.4 L608.5 865.4 L608.5 870.0 L607.3 874.1 L605.1 877.2 L602.0 879.2 L598.2 879.9 L594.1 879.3 L589.9 877.3 L586.0 874.2 L582.5 870.0 L579.9 865.0 L578.2 859.6 L577.6 854.0 L578.3 848.7 L580.1 843.9 L582.9 840.0 L586.8 837.1 L591.3 835.5" fill="none" stroke="#3a58d8" stroke-width="2.5" stroke-linejoin="round"/>
<path d="M567.3 900.2 L563.4 900.4 L559.2 899.2 L555.0 896.7 L551.3 893.0 L548.1 888.5 L545.9 883.2 L544.6 877.7 L544.6 872.2 L545.7 867.1 L548.0 862.6 L551.3 859.1" fill="none" stroke="#5878e8" stroke-width="4.5" stroke-linejoin="round" stroke-linecap="butt"/>
<path d="M580.1 892.8 L576.3 893.6 L572.2 893.1 L568.0 891.2 L564.0 888.0 L560.6 883.9 L557.9 878.9 L556.1 873.5 L555.5 868.0 L556.1 862.6 L557.8 857.8 L560.7 853.8" fill="none" stroke="#5878e8" stroke-width="4.5" stroke-linejoin="round" stroke-linecap="butt"/>
<path d="M589.2 886.6 L585.3 886.7 L581.1 885.4 L576.9 882.8 L573.2 879.1 L570.1 874.5 L567.9 869.3 L566.7 863.8 L566.7 858.3 L567.9 853.2 L570.3 848.7 L573.6 845.3" fill="none" stroke="#5878e8" stroke-width="4.5" stroke-linejoin="round" stroke-linecap="butt"/>
<path d="M602.0 879.2 L598.2 879.9 L594.1 879.3 L589.9 877.3 L586.0 874.2 L582.5 870.0 L579.9 865.0 L578.2 859.6 L577.6 854.0 L578.3 848.7 L580.1 843.9 L582.9 840.0" fill="none" stroke="#5878e8" stroke-width="4.5" stroke-linejoin="round" stroke-linecap="butt"/>
<path d="M445.0 826.0 C449.2 827.5 461.7 832.2 470.0 835.0 C478.3 837.8 490.8 841.7 495.0 843.0" fill="none" stroke="#5a80e8" stroke-width="13" stroke-linejoin="round"/>
<path d="M445.0 826.0 C449.2 827.5 461.7 832.2 470.0 835.0 C478.3 837.8 490.8 841.7 495.0 843.0" fill="none" stroke="#88a8f0" stroke-width="5.9" stroke-linejoin="round" opacity="0.6" transform="translate(-1.5,-0.5)"/>
<path d="M432.0 826.0 L454.0 812.0 L452.0 842.0Z" fill="#7aa0f0"/>
<path d="M600.0 806.0 C605.0 806.7 622.4 809.0 630.0 810.0 C637.6 811.0 643.1 811.7 645.7 812.1" fill="none" stroke="#5a7ee8" stroke-width="12" stroke-linejoin="round"/>
<path d="M600.0 806.0 C605.0 806.7 622.4 809.0 630.0 810.0 C637.6 811.0 643.1 811.7 645.7 812.1" fill="none" stroke="#88a8f0" stroke-width="5.4" stroke-linejoin="round" opacity="0.6" transform="translate(-1.5,-0.5)"/>
<path d="M644.5 821.6 L660.0 814.0 L647.0 802.6Z" fill="#5a7ee8"/>
<path d="M590.0 755.0 C593.3 757.5 605.7 766.7 610.0 770.0 C614.3 773.3 614.7 773.8 615.6 774.5" fill="none" stroke="#3a5ae0" stroke-width="10" stroke-linejoin="round"/>
<path d="M610.6 780.8 L625.0 782.0 L620.6 768.3Z" fill="#3a5ae0"/>
<path d="M473.1 476.7 L467.8 477.9 L462.8 478.7 L458.5 479.0 L455.1 479.0 L453.0 478.8 L452.1 478.4 L452.7 478.0 L454.7 477.6 L457.8 477.5 L462.0 477.6 L466.9 478.2 L472.3 479.1 L477.7 480.5 L482.8 482.3 L487.3 484.5 L490.9 487.1 L493.3 489.9 L494.4 492.9 L494.0 496.0 L492.4 498.9 L489.4 501.8 L485.4 504.3 L480.6 506.5 L475.4 508.2 L470.0 509.6 L464.8 510.5 L460.3 510.9 L456.6 511.0 L454.0 510.9 L452.8 510.5 L452.9 510.1 L454.5 509.7 L457.3 509.5 L461.1 509.6 L465.9 509.9 L471.1 510.7 L476.6 512.0 L481.8 513.7 L486.5 515.8 L490.4 518.2 L493.2 521.0 L494.7 523.9 L494.8 527.0 L493.6 530.0 L491.0 532.9 L487.3 535.5 L482.8 537.8 L477.6 539.7 L472.2 541.2 L467.0 542.2 L462.2 542.8 L458.2 543.0 L455.3 542.9 L453.6 542.6 L453.3 542.2 L454.4 541.8 L456.8 541.6 L460.4 541.5 L464.9 541.8 L470.0 542.4 L475.4 543.5 L480.7 545.1 L485.7 547.0 L489.8 549.4 L493.0 552.1 L494.9 555.0 L495.5 558.0 L494.7 561.1 L492.5 564.0 L489.2 566.7 L484.8 569.1 L479.8 571.2 L474.5 572.8 L469.1 573.9 L464.2 574.7 L459.9 575.0 L456.6 575.0 L454.5 574.7 L453.8 574.4 L454.4 573.9 L456.4 573.6 L459.7 573.5 L463.9 573.6 L468.9 574.2 L474.2 575.1 L479.6 576.5 L484.7 578.4 L489.2 580.6 L492.7 583.2 L495.0 586.0 L496.0 589.1 L495.6 592.1 L493.9 595.1 L490.9 597.9 L486.8 600.4 L482.0 602.6 L476.7 604.3 L471.4 605.6 L466.2 606.5 L461.7 606.9 L458.1 607.0 L455.6 606.8 L454.4 606.5 L454.6 606.1 L456.2 605.7 L459.1 605.5 L463.0 605.6 L467.8 606.0 L473.0 606.8 L478.5 608.0 L483.7 609.7 L488.4 611.9 L492.2 614.3 L495.0 617.1 L496.4 620.1 L496.5 623.1 L495.1 626.1 L492.5 629.0 L488.8 631.6 L484.2 633.9 L479.0 635.8 L473.6 637.2 L468.4 638.2 L463.6 638.8 L459.7 639.0 L456.8 638.9 L455.2 638.6 L455.0 638.2 L456.1 637.8 L458.6 637.5 L462.2 637.5 L466.7 637.8 L471.9 638.5" fill="none" stroke="#98b8e4" stroke-width="5.2" stroke-linejoin="round"/>
<path d="M452.7 478.0 L454.7 477.6 L457.8 477.5 L462.0 477.6 L466.9 478.2 L472.3 479.1 L477.7 480.5 L482.8 482.3 L487.3 484.5 L490.9 487.1 L493.3 489.9 L494.4 492.9" fill="none" stroke="#b8d2f2" stroke-width="9.4" stroke-linejoin="round" stroke-linecap="butt"/>
<path d="M452.9 510.1 L454.5 509.7 L457.3 509.5 L461.1 509.6 L465.9 509.9 L471.1 510.7 L476.6 512.0 L481.8 513.7 L486.5 515.8 L490.4 518.2 L493.2 521.0 L494.7 523.9" fill="none" stroke="#b8d2f2" stroke-width="9.4" stroke-linejoin="round" stroke-linecap="butt"/>
<path d="M453.3 542.2 L454.4 541.8 L456.8 541.6 L460.4 541.5 L464.9 541.8 L470.0 542.4 L475.4 543.5 L480.7 545.1 L485.7 547.0 L489.8 549.4 L493.0 552.1 L494.9 555.0" fill="none" stroke="#b8d2f2" stroke-width="9.4" stroke-linejoin="round" stroke-linecap="butt"/>
<path d="M454.4 573.9 L456.4 573.6 L459.7 573.5 L463.9 573.6 L468.9 574.2 L474.2 575.1 L479.6 576.5 L484.7 578.4 L489.2 580.6 L492.7 583.2 L495.0 586.0 L496.0 589.1" fill="none" stroke="#b8d2f2" stroke-width="9.4" stroke-linejoin="round" stroke-linecap="butt"/>
<path d="M454.6 606.1 L456.2 605.7 L459.1 605.5 L463.0 605.6 L467.8 606.0 L473.0 606.8 L478.5 608.0 L483.7 609.7 L488.4 611.9 L492.2 614.3 L495.0 617.1 L496.4 620.1" fill="none" stroke="#b8d2f2" stroke-width="9.4" stroke-linejoin="round" stroke-linecap="butt"/>
<path d="M455.0 638.2 L456.1 637.8 L458.6 637.5 L462.2 637.5 L466.7 637.8 L471.9 638.5" fill="none" stroke="#b8d2f2" stroke-width="9.4" stroke-linejoin="round" stroke-linecap="butt"/>
<path d="M520.0 474.2 L522.5 474.4 L526.1 474.9 L530.3 475.8 L535.0 477.1 L539.8 478.8 L544.4 480.9 L548.4 483.3 L551.6 486.0 L553.8 488.8 L554.9 491.8 L554.6 494.6 L553.2 497.4 L550.6 499.8 L547.0 502.0 L542.6 503.8 L537.8 505.2 L532.8 506.2 L528.0 506.8 L523.7 507.0 L520.1 507.0 L517.5 506.8 L516.1 506.5 L515.9 506.2 L517.0 506.1 L519.2 506.2 L522.5 506.6 L526.6 507.4 L531.1 508.5 L535.9 510.1 L540.6 512.1 L544.8 514.4 L548.3 517.0 L550.9 519.8 L552.3 522.8 L552.5 525.7 L551.4 528.4 L549.1 531.0 L545.8 533.3 L541.6 535.2 L536.9 536.7 L532.0 537.8 L527.1 538.5 L522.5 538.9 L518.7 538.9 L515.8 538.8 L514.0 538.5 L513.4 538.2 L514.1 538.0 L516.0 538.0 L519.0 538.3 L522.8 539.0 L527.3 540.0 L532.0 541.5 L536.8 543.3 L541.2 545.6 L544.9 548.1 L547.8 550.9 L549.6 553.8 L550.2 556.7 L549.5 559.5 L547.6 562.1 L544.5 564.5 L540.6 566.6 L536.1 568.2 L531.1 569.4 L526.2 570.3 L521.5 570.7 L517.4 570.9 L514.2 570.8 L512.1 570.5 L511.1 570.2 L511.4 570.0 L512.9 569.9 L515.6 570.1 L519.2 570.7 L523.5 571.6 L528.1 572.9 L532.9 574.6 L537.5 576.7 L541.5 579.2 L544.6 581.9 L546.8 584.7 L547.7 587.7 L547.4 590.5 L545.9 593.3 L543.2 595.7 L539.6 597.9 L535.2 599.6 L530.3 601.0 L525.3 602.0 L520.5 602.5 L516.2 602.8 L512.7 602.7 L510.2 602.5 L508.9 602.2 L508.8 602.0 L509.9 601.8 L512.2 601.9 L515.6 602.4 L519.7 603.1 L524.3 604.3 L529.1 606.0 L533.7 608.0 L537.9 610.3 L541.4 612.9 L543.8 615.8 L545.2 618.7 L545.3 621.6 L544.1 624.3 L541.8 626.9 L538.4 629.2 L534.2 631.0" fill="none" stroke="#a4c2e6" stroke-width="5.2" stroke-linejoin="round"/>
<path d="M520.0 474.2 L522.5 474.4 L526.1 474.9 L530.3 475.8 L535.0 477.1 L539.8 478.8 L544.4 480.9 L548.4 483.3 L551.6 486.0 L553.8 488.8 L554.9 491.8" fill="none" stroke="#c2daf4" stroke-width="9.4" stroke-linejoin="round" stroke-linecap="butt"/>
<path d="M515.9 506.2 L517.0 506.1 L519.2 506.2 L522.5 506.6 L526.6 507.4 L531.1 508.5 L535.9 510.1 L540.6 512.1 L544.8 514.4 L548.3 517.0 L550.9 519.8 L552.3 522.8" fill="none" stroke="#c2daf4" stroke-width="9.4" stroke-linejoin="round" stroke-linecap="butt"/>
<path d="M513.4 538.2 L514.1 538.0 L516.0 538.0 L519.0 538.3 L522.8 539.0 L527.3 540.0 L532.0 541.5 L536.8 543.3 L541.2 545.6 L544.9 548.1 L547.8 550.9 L549.6 553.8 L550.2 556.7" fill="none" stroke="#c2daf4" stroke-width="9.4" stroke-linejoin="round" stroke-linecap="butt"/>
<path d="M511.4 570.0 L512.9 569.9 L515.6 570.1 L519.2 570.7 L523.5 571.6 L528.1 572.9 L532.9 574.6 L537.5 576.7 L541.5 579.2 L544.6 581.9 L546.8 584.7 L547.7 587.7" fill="none" stroke="#c2daf4" stroke-width="9.4" stroke-linejoin="round" stroke-linecap="butt"/>
<path d="M508.8 602.0 L509.9 601.8 L512.2 601.9 L515.6 602.4 L519.7 603.1 L524.3 604.3 L529.1 606.0 L533.7 608.0 L537.9 610.3 L541.4 612.9 L543.8 615.8 L545.2 618.7" fill="none" stroke="#c2daf4" stroke-width="9.4" stroke-linejoin="round" stroke-linecap="butt"/>
<path d="M422.1 503.9 L419.3 506.3 L416.6 508.3 L414.2 509.8 L412.2 510.9 L410.9 511.5 L410.3 511.5 L410.5 511.1 L411.6 510.4 L413.4 509.3 L415.9 508.2 L419.0 507.0 L422.4 505.9 L426.0 505.1 L429.6 504.6 L433.0 504.5 L435.9 505.0 L438.2 505.9 L439.8 507.4 L440.6 509.3 L440.6 511.5 L439.8 514.1 L438.3 516.8 L436.2 519.6 L433.6 522.3 L430.9 524.8 L428.1 526.9 L425.6 528.7 L423.4 529.9 L421.8 530.7 L420.9 530.9 L420.8 530.7 L421.5 530.1 L423.0 529.1 L425.3 528.0 L428.2 526.8 L431.5 525.7 L435.1 524.7 L438.7 524.1 L442.2 523.9 L445.3 524.1 L447.9 524.8 L449.8 526.1 L450.9 527.8 L451.2 530.0 L450.7 532.4 L449.4 535.1 L447.5 537.9 L445.1 540.6 L442.4 543.2 L439.7 545.5 L437.0 547.4 L434.6 548.8 L432.8 549.8 L431.6 550.2 L431.2 550.2 L431.6 549.7 L432.8 548.9 L434.8 547.8 L437.4 546.6 L440.6 545.5 L444.1 544.4 L447.7 543.7 L451.3 543.3" fill="none" stroke="#8fb2e2" stroke-width="4.9" stroke-linejoin="round"/>
<path d="M410.5 511.1 L411.6 510.4 L413.4 509.3 L415.9 508.2 L419.0 507.0 L422.4 505.9 L426.0 505.1 L429.6 504.6 L433.0 504.5 L435.9 505.0 L438.2 505.9 L439.8 507.4" fill="none" stroke="#a8c8f0" stroke-width="8.8" stroke-linejoin="round" stroke-linecap="butt"/>
<path d="M420.8 530.7 L421.5 530.1 L423.0 529.1 L425.3 528.0 L428.2 526.8 L431.5 525.7 L435.1 524.7 L438.7 524.1 L442.2 523.9 L445.3 524.1 L447.9 524.8 L449.8 526.1" fill="none" stroke="#a8c8f0" stroke-width="8.8" stroke-linejoin="round" stroke-linecap="butt"/>
<path d="M431.2 550.2 L431.6 549.7 L432.8 548.9 L434.8 547.8 L437.4 546.6 L440.6 545.5 L444.1 544.4 L447.7 543.7 L451.3 543.3" fill="none" stroke="#a8c8f0" stroke-width="8.8" stroke-linejoin="round" stroke-linecap="butt"/>
<path d="M572.1 504.7 L568.8 507.1 L565.6 509.2 L562.7 510.8 L560.4 511.9 L558.9 512.5 L558.1 512.6 L558.4 512.2 L559.5 511.5 L561.6 510.5 L564.5 509.4 L568.0 508.3 L572.0 507.4 L576.1 506.8 L580.3 506.5 L584.1 506.6 L587.5 507.3 L590.2 508.5 L592.1 510.2 L593.0 512.4 L593.0 514.9 L592.1 517.7 L590.3 520.7 L587.8 523.7 L584.9 526.6 L581.6 529.3 L578.3 531.6 L575.2 533.6 L572.5 535.0 L570.5 535.9 L569.2 536.2 L568.8 536.1 L569.4 535.6 L570.9 534.8 L573.3 533.8 L576.5 532.7 L580.2 531.7 L584.2 530.8 L588.4 530.3 L592.5 530.2 L596.2 530.5 L599.3 531.4 L601.7 532.7 L603.3 534.6 L603.9 536.9 L603.5 539.6 L602.2 542.5 L600.2 545.5 L597.5 548.5 L594.4 551.3 L591.1 553.9 L587.9 556.1 L584.9 557.8 L582.4 559.0 L580.6 559.7 L579.7 559.9 L579.7 559.7 L580.6 559.0 L582.5 558.1 L585.2 557.1 L588.5 556.0 L592.4 555.0 L596.5 554.3 L600.7 553.9 L604.6 553.9 L608.2 554.4 L611.1 555.5 L613.1 557.1 L614.3 559.1 L614.6 561.6 L613.9 564.3 L612.3 567.3 L610.0 570.3 L607.1 573.3 L603.9 576.0 L600.6 578.4 L597.4 580.5 L594.6 582.0 L592.4 583.1" fill="none" stroke="#9cc0e8" stroke-width="5.2" stroke-linejoin="round"/>
<path d="M558.4 512.2 L559.5 511.5 L561.6 510.5 L564.5 509.4 L568.0 508.3 L572.0 507.4 L576.1 506.8 L580.3 506.5 L584.1 506.6 L587.5 507.3 L590.2 508.5 L592.1 510.2" fill="none" stroke="#b8d4f4" stroke-width="9.4" stroke-linejoin="round" stroke-linecap="butt"/>
<path d="M568.8 536.1 L569.4 535.6 L570.9 534.8 L573.3 533.8 L576.5 532.7 L580.2 531.7 L584.2 530.8 L588.4 530.3 L592.5 530.2 L596.2 530.5 L599.3 531.4 L601.7 532.7 L603.3 534.6" fill="none" stroke="#b8d4f4" stroke-width="9.4" stroke-linejoin="round" stroke-linecap="butt"/>
<path d="M579.7 559.7 L580.6 559.0 L582.5 558.1 L585.2 557.1 L588.5 556.0 L592.4 555.0 L596.5 554.3 L600.7 553.9 L604.6 553.9 L608.2 554.4 L611.1 555.5 L613.1 557.1" fill="none" stroke="#b8d4f4" stroke-width="9.4" stroke-linejoin="round" stroke-linecap="butt"/>
<path d="M473.1 468.7 L467.8 469.9 L462.8 470.6 L458.5 470.9 L455.2 470.9 L453.0 470.7 L452.1 470.3 L452.6 469.9 L454.4 469.6 L457.5 469.4 L461.5 469.6 L466.3 470.0 L471.6 471.0 L477.0 472.3 L482.1 474.1 L486.6 476.2 L490.3 478.8 L492.9 481.5 L494.1 484.5 L494.1 487.5 L492.6 490.5 L489.9 493.3 L486.2 495.9 L481.6 498.1 L476.4 499.9 L471.1 501.3 L465.9 502.2 L461.2 502.8 L457.3 502.9 L454.4 502.8 L452.8 502.5 L452.5 502.1 L453.6 501.7 L456.0 501.5 L459.5 501.4 L464.0 501.7 L469.0 502.4 L474.4 503.5 L479.7 505.0 L484.6 507.0 L488.8 509.3 L492.0 512.0 L494.0 514.8 L494.7 517.8 L494.0 520.8 L492.0 523.8 L488.8 526.5 L484.6 528.9 L479.7 530.9 L474.4 532.6 L469.1 533.8 L464.1 534.5 L459.7 534.9 L456.2 534.9 L453.9 534.7 L452.9 534.3 L453.2 533.9 L454.9 533.6 L457.8 533.4 L461.8 533.5 L466.5 534.0 L471.7 534.8 L477.1 536.1 L482.3 537.8 L486.9 540.0 L490.7 542.4 L493.4 545.2" fill="none" stroke="#cdd69a" stroke-width="5.2" stroke-linejoin="round"/>
<path d="M452.6 469.9 L454.4 469.6 L457.5 469.4 L461.5 469.6 L466.3 470.0 L471.6 471.0 L477.0 472.3 L482.1 474.1 L486.6 476.2 L490.3 478.8 L492.9 481.5 L494.1 484.5" fill="none" stroke="#e4eab4" stroke-width="9.4" stroke-linejoin="round" stroke-linecap="butt"/>
<path d="M452.5 502.1 L453.6 501.7 L456.0 501.5 L459.5 501.4 L464.0 501.7 L469.0 502.4 L474.4 503.5 L479.7 505.0 L484.6 507.0 L488.8 509.3 L492.0 512.0 L494.0 514.8" fill="none" stroke="#e4eab4" stroke-width="9.4" stroke-linejoin="round" stroke-linecap="butt"/>
<path d="M453.2 533.9 L454.9 533.6 L457.8 533.4 L461.8 533.5 L466.5 534.0 L471.7 534.8 L477.1 536.1 L482.3 537.8 L486.9 540.0 L490.7 542.4 L493.4 545.2" fill="none" stroke="#e4eab4" stroke-width="9.4" stroke-linejoin="round" stroke-linecap="butt"/>
<path d="M518.9 464.6 L521.4 464.7 L525.0 465.1 L529.2 465.9 L533.9 467.1 L538.6 468.7 L543.2 470.6 L547.3 472.9 L550.6 475.5 L553.0 478.3 L554.1 481.1 L554.1 484.0 L552.8 486.8 L550.3 489.3 L546.9 491.6 L542.7 493.5 L538.0 495.0 L533.0 496.2 L528.2 496.9 L523.9 497.3 L520.2 497.4 L517.5 497.3 L515.9 497.0 L515.5 496.7 L516.4 496.6 L518.4 496.6 L521.5 496.8 L525.4 497.4 L529.9 498.4 L534.7 499.8 L539.4 501.6 L543.8 503.7 L547.5 506.2 L550.3 508.9 L552.1 511.7 L552.6 514.6 L551.9 517.4 L550.0 520.1 L547.0 522.5 L543.2 524.6 L538.6 526.3 L533.8 527.6 L528.9 528.5 L524.3 529.1 L520.2 529.3 L517.0 529.3 L514.8 529.1 L513.9 528.8 L514.1 528.6 L515.6 528.5 L518.2 528.6 L521.8 529.0 L526.0 529.8 L530.7 531.0 L535.5 532.6 L540.0 534.6 L544.1 536.9 L547.4 539.5 L549.7 542.3 L550.8 545.1" fill="none" stroke="#ccd598" stroke-width="5.2" stroke-linejoin="round"/>
<path d="M518.9 464.6 L521.4 464.7 L525.0 465.1 L529.2 465.9 L533.9 467.1 L538.6 468.7 L543.2 470.6 L547.3 472.9 L550.6 475.5 L553.0 478.3 L554.1 481.1" fill="none" stroke="#e2e8b0" stroke-width="9.4" stroke-linejoin="round" stroke-linecap="butt"/>
<path d="M515.5 496.7 L516.4 496.6 L518.4 496.6 L521.5 496.8 L525.4 497.4 L529.9 498.4 L534.7 499.8 L539.4 501.6 L543.8 503.7 L547.5 506.2 L550.3 508.9 L552.1 511.7 L552.6 514.6" fill="none" stroke="#e2e8b0" stroke-width="9.4" stroke-linejoin="round" stroke-linecap="butt"/>
<path d="M514.1 528.6 L515.6 528.5 L518.2 528.6 L521.8 529.0 L526.0 529.8 L530.7 531.0 L535.5 532.6 L540.0 534.6 L544.1 536.9 L547.4 539.5 L549.7 542.3 L550.8 545.1" fill="none" stroke="#e2e8b0" stroke-width="9.4" stroke-linejoin="round" stroke-linecap="butt"/>
<path d="M458 470 Q468 452 488 462" fill="none" stroke="#c8d4a0" stroke-width="5"/>
<path d="M525 475 Q538 455 556 475" fill="none" stroke="#c8d4a0" stroke-width="5"/>
<path d="M370.0 493.4 L366.0 495.9 L362.2 497.9 L358.8 499.4 L356.1 500.3 L354.3 500.8 L353.5 500.7 L353.9 500.2 L355.3 499.3 L357.8 498.3 L361.2 497.2 L365.4 496.2 L369.9 495.4 L374.7 494.9 L379.3 494.9 L383.6 495.3 L387.2 496.4 L390.0 498.0 L391.7 500.0 L392.3 502.6 L391.8 505.4 L390.3 508.5 L387.8 511.7 L384.6 514.8 L380.8 517.8 L376.8 520.4 L372.9 522.6 L369.4 524.2 L366.4 525.4 L364.3 526.0 L363.1 526.0 L363.1 525.6 L364.2 524.9 L366.4 523.9 L369.5 522.8 L373.4 521.8 L377.9 520.9 L382.6 520.3 L387.3 520.1 L391.7 520.4 L395.6 521.3 L398.6 522.7 L400.7 524.6 L401.7 527.0 L401.6 529.7 L400.4 532.8 L398.2 535.9 L395.2 539.1 L391.6 542.1 L387.7 544.8 L383.7 547.2 L380.0 549.0 L376.8 550.3 L374.4 551.1 L372.9 551.3 L372.5 551.1 L373.2 550.5 L375.0 549.5 L377.8 548.5 L381.5 547.4 L385.8 546.4 L390.5 545.7 L395.2 545.4 L399.8 545.5 L403.9 546.2 L407.2 547.4 L409.6 549.2 L411.0 551.4 L411.2 554.1 L410.4 557.0 L408.5 560.2 L405.7 563.3 L402.3 566.4 L398.5 569.2 L394.5 571.7 L390.7 573.7 L387.3 575.2 L384.6 576.2" fill="none" stroke="#e6cf3a" stroke-width="5.6" stroke-linejoin="round"/>
<path d="M353.9 500.2 L355.3 499.3 L357.8 498.3 L361.2 497.2 L365.4 496.2 L369.9 495.4 L374.7 494.9 L379.3 494.9 L383.6 495.3 L387.2 496.4 L390.0 498.0 L391.7 500.0" fill="none" stroke="#f6e880" stroke-width="10.0" stroke-linejoin="round" stroke-linecap="butt"/>
<path d="M363.1 525.6 L364.2 524.9 L366.4 523.9 L369.5 522.8 L373.4 521.8 L377.9 520.9 L382.6 520.3 L387.3 520.1 L391.7 520.4 L395.6 521.3 L398.6 522.7 L400.7 524.6" fill="none" stroke="#f6e880" stroke-width="10.0" stroke-linejoin="round" stroke-linecap="butt"/>
<path d="M372.5 551.1 L373.2 550.5 L375.0 549.5 L377.8 548.5 L381.5 547.4 L385.8 546.4 L390.5 545.7 L395.2 545.4 L399.8 545.5 L403.9 546.2 L407.2 547.4 L409.6 549.2" fill="none" stroke="#f6e880" stroke-width="10.0" stroke-linejoin="round" stroke-linecap="butt"/>
<path d="M352.0 480.0 C350.7 477.0 343.3 467.0 344.0 462.0 C344.7 457.0 349.5 451.7 356.0 450.0 C362.5 448.3 377.0 448.7 383.0 452.0 C389.0 455.3 391.7 465.0 392.0 470.0 C392.3 475.0 386.2 480.0 385.0 482.0" fill="none" stroke="#eed840" stroke-width="7" stroke-linecap="round" stroke-linejoin="round" />
<path d="M352.0 480.0 C350.7 477.0 343.3 467.0 344.0 462.0 C344.7 457.0 349.5 451.7 356.0 450.0 C362.5 448.3 377.0 448.7 383.0 452.0 C389.0 455.3 391.7 465.0 392.0 470.0 C392.3 475.0 386.2 480.0 385.0 482.0" fill="none" stroke="#fff0a0" stroke-width="2.8" stroke-linecap="round" stroke-linejoin="round" transform="translate(-1,-1)" opacity="0.8"/>
<path d="M622.8 514.3 L619.9 517.2 L617.0 519.7 L614.4 521.7 L612.2 523.1 L610.8 523.9 L610.1 524.0 L610.2 523.6 L611.3 522.6 L613.2 521.3 L615.9 519.8 L619.2 518.1 L623.0 516.6 L627.0 515.3 L631.0 514.3 L634.8 513.9 L638.2 514.0 L641.0 514.8 L643.1 516.2 L644.3 518.2 L644.6 520.7 L644.0 523.6 L642.6 526.9 L640.6 530.2 L638.0 533.5 L635.2 536.6 L632.2 539.3 L629.4 541.6 L627.0 543.4 L625.2 544.5 L624.0 544.9 L623.7 544.8 L624.3 544.1 L625.7 543.0 L628.0 541.5 L631.0 539.9 L634.5 538.3 L638.4 536.9 L642.5 535.7 L646.5 535.0 L650.1 534.8 L653.3 535.2 L655.7 536.3 L657.4 537.9 L658.2 540.2 L658.1 542.9 L657.1 546.0 L655.4 549.3 L653.1 552.6 L650.4 555.8 L647.5 558.8 L644.6 561.4 L642.0 563.4 L639.8 564.9 L638.2 565.7 L637.5 565.9 L637.5 565.5 L638.5 564.6 L640.3 563.3 L643.0 561.8 L646.2 560.1 L650.0 558.5" fill="none" stroke="#e8d040" stroke-width="5.6" stroke-linejoin="round"/>
<path d="M610.2 523.6 L611.3 522.6 L613.2 521.3 L615.9 519.8 L619.2 518.1 L623.0 516.6 L627.0 515.3 L631.0 514.3 L634.8 513.9 L638.2 514.0 L641.0 514.8 L643.1 516.2" fill="none" stroke="#f8e880" stroke-width="10.0" stroke-linejoin="round" stroke-linecap="butt"/>
<path d="M623.7 544.8 L624.3 544.1 L625.7 543.0 L628.0 541.5 L631.0 539.9 L634.5 538.3 L638.4 536.9 L642.5 535.7 L646.5 535.0 L650.1 534.8 L653.3 535.2 L655.7 536.3" fill="none" stroke="#f8e880" stroke-width="10.0" stroke-linejoin="round" stroke-linecap="butt"/>
<path d="M637.5 565.5 L638.5 564.6 L640.3 563.3 L643.0 561.8 L646.2 560.1 L650.0 558.5" fill="none" stroke="#f8e880" stroke-width="10.0" stroke-linejoin="round" stroke-linecap="butt"/>
<path d="M640.0 500.0 C639.5 497.3 634.5 487.3 637.0 484.0 C639.5 480.7 649.2 479.3 655.0 480.0 C660.8 480.7 669.2 483.8 672.0 488.0 C674.8 492.2 674.8 499.7 672.0 505.0 C669.2 510.3 657.8 517.5 655.0 520.0" fill="none" stroke="#eed840" stroke-width="7" stroke-linecap="round" stroke-linejoin="round" />
<path d="M640.0 500.0 C639.5 497.3 634.5 487.3 637.0 484.0 C639.5 480.7 649.2 479.3 655.0 480.0 C660.8 480.7 669.2 483.8 672.0 488.0 C674.8 492.2 674.8 499.7 672.0 505.0 C669.2 510.3 657.8 517.5 655.0 520.0" fill="none" stroke="#fff0a0" stroke-width="2.8" stroke-linecap="round" stroke-linejoin="round" transform="translate(-1,-1)" opacity="0.8"/>
<path d="M490.8 603.9 L486.7 607.7 L482.7 611.0 L479.0 613.6 L476.0 615.4 L473.8 616.3 L472.7 616.3 L472.8 615.6 L474.1 614.2 L476.5 612.3 L480.0 610.1 L484.4 607.7 L489.5 605.4 L494.8 603.5 L500.2 602.0 L505.4 601.2 L510.0 601.2 L513.9 602.0 L516.7 603.7 L518.3 606.2 L518.8 609.4 L518.1 613.2 L516.2 617.4 L513.4 621.8 L509.9 626.1 L506.0 630.2 L501.8 633.9 L497.9 637.0 L494.3 639.4 L491.5 640.9 L489.7 641.5 L488.9 641.4 L489.3 640.4 L491.0 638.9 L493.8 636.8 L497.6 634.5 L502.2 632.2 L507.3 630.0 L512.7 628.2 L518.1 626.9 L523.1 626.3 L527.6 626.5 L531.1 627.6 L533.6 629.5 L534.9 632.2 L535.0 635.6 L533.9 639.5 L531.8 643.8 L528.8 648.2 L525.1 652.5 L521.1 656.6 L517.0 660.1 L513.1 663.0 L509.8 665.1" fill="none" stroke="#f0c000" stroke-width="8.4" stroke-linejoin="round"/>
<path d="M472.8 615.6 L474.1 614.2 L476.5 612.3 L480.0 610.1 L484.4 607.7 L489.5 605.4 L494.8 603.5 L500.2 602.0 L505.4 601.2 L510.0 601.2 L513.9 602.0 L516.7 603.7" fill="none" stroke="#ffdc30" stroke-width="15.0" stroke-linejoin="round" stroke-linecap="butt"/>
<path d="M488.9 641.4 L489.3 640.4 L491.0 638.9 L493.8 636.8 L497.6 634.5 L502.2 632.2 L507.3 630.0 L512.7 628.2 L518.1 626.9 L523.1 626.3 L527.6 626.5 L531.1 627.6 L533.6 629.5" fill="none" stroke="#ffdc30" stroke-width="15.0" stroke-linejoin="round" stroke-linecap="butt"/>
<path d="M478.0 645.0 C481.3 647.2 489.3 656.8 498.0 658.0 C506.7 659.2 521.7 655.0 530.0 652.0 C538.3 649.0 545.0 642.0 548.0 640.0" fill="none" stroke="#f0c000" stroke-width="5" stroke-linecap="round" stroke-linejoin="round" />
<path d="M376.0 570.0 C378.0 574.3 382.3 593.8 388.0 596.0 C393.7 598.2 401.3 584.0 410.0 583.0 C418.7 582.0 430.0 587.2 440.0 590.0 C450.0 592.8 458.3 606.3 470.0 600.0 C481.7 593.7 503.3 560.0 510.0 552.0" fill="none" stroke="#e8881a" stroke-width="4" stroke-linecap="round" stroke-linejoin="round" />
<path d="M538.0 594.0 C542.3 592.8 555.8 585.2 564.0 587.0 C572.2 588.8 580.0 604.7 587.0 605.0 C594.0 605.3 602.8 591.7 606.0 589.0" fill="none" stroke="#e8881a" stroke-width="4" stroke-linecap="round" stroke-linejoin="round" />
<path d="M490.0 550.0 C494.2 553.3 509.2 564.2 515.0 570.0 C520.8 575.8 523.3 582.5 525.0 585.0" fill="none" stroke="#e07010" stroke-width="3.5" stroke-linecap="round" stroke-linejoin="round" />
<path d="M324.0 828.0 C320.0 825.7 307.3 818.3 300.0 814.0 C292.7 809.7 283.7 804.3 280.0 802.0 C276.3 799.7 278.2 800.5 277.8 800.2" fill="none" stroke="#6a92ec" stroke-width="13" stroke-linejoin="round"/>
<path d="M324.0 828.0 C320.0 825.7 307.3 818.3 300.0 814.0 C292.7 809.7 283.7 804.3 280.0 802.0 C276.3 799.7 278.2 800.5 277.8 800.2" fill="none" stroke="#9cbcf6" stroke-width="5.9" stroke-linejoin="round" opacity="0.6" transform="translate(-1.5,-0.5)"/>
<path d="M285.0 791.8 L266.0 790.0 L270.7 808.5Z" fill="#6a92ec"/>
<path d="M324.0 828.0 C326.7 830.0 335.7 834.7 340.0 840.0 C344.3 845.3 348.3 856.7 350.0 860.0" fill="none" stroke="#5a7ee0" stroke-width="4" stroke-linecap="round" stroke-linejoin="round" />
<path d="M433.0 835.0 L452.0 826.0 L456.0 850.0 L440.0 857.0Z" fill="#c8d0a0"/>
<path d="M440.0 855.0 L482.0 832.0" fill="none" stroke="#f0d020" stroke-width="3" stroke-linecap="round" stroke-linejoin="round" />
<path d="M296.0 712.0 L306.0 708.0 L303.0 735.0 L294.0 735.0Z" fill="#a8c4a0"/>
<path d="M548.0 757.0 C546.7 762.5 540.2 779.5 540.0 790.0 C539.8 800.5 543.7 812.5 547.0 820.0 C550.3 827.5 555.5 833.7 560.0 835.0 C564.5 836.3 571.7 829.2 574.0 828.0" fill="none" stroke="#f0d020" stroke-width="4" stroke-linecap="round" stroke-linejoin="round" />
<path d="M280.0 715.0 C279.2 720.0 273.3 736.7 275.0 745.0 C276.7 753.3 287.5 761.7 290.0 765.0" fill="none" stroke="#b8c8a0" stroke-width="3.5" stroke-linecap="round" stroke-linejoin="round" /></svg>
<div style="position:absolute;left:1020px;top:282px;width:1px;height:964px;background:#8a8a8a"></div>
<div style="position:absolute;left:1021px;top:282px;width:1243px;height:41px;background:#ececec"></div>
<svg style="position:absolute;left:1026px;top:287.7px" width="28" height="28" viewBox="0 0 28 28"><circle cx="14" cy="14" r="13.9" fill="#5f5f5f"/><path d="M8.6 8.6L19.4 19.4M19.4 8.6L8.6 19.4" stroke="#ececec" stroke-width="3.2" stroke-linecap="round"/></svg>
<svg style="position:absolute;left:1062px;top:287.7px" width="28" height="28" viewBox="0 0 28 28"><circle cx="14" cy="14" r="13.9" fill="#5f5f5f"/><rect x="12" y="9" width="9.5" height="8" fill="none" stroke="#ececec" stroke-width="1.8"/><rect x="7" y="13" width="10" height="8.5" fill="#5f5f5f" stroke="#ececec" stroke-width="1.8"/></svg>
<div style="position:absolute;top:293.03px;font-family:'Liberation Sans', sans-serif;font-size:23px;line-height:23px;color:#1e1e1e;font-weight:normal;white-space:nowrap;letter-spacing:0.45px;left:1277.5px;width:800px;text-align:center;">Log</div>
<div style="position:absolute;left:1021px;top:323px;width:1242px;height:2px;background:#b5b5b5"></div>
<div style="position:absolute;left:1021px;top:325px;width:1243px;height:3px;background:#e9e9e9"></div>
<div style="position:absolute;left:1021px;top:328px;width:1243px;height:254px;background:#fff"></div>
<div style="position:absolute;left:1021px;top:582px;width:1243px;height:1px;background:#a9a9a9"></div>
<div style="position:absolute;left:1307px;top:328px;width:9px;height:2px;background:#222"></div>
<div style="position:absolute;left:1310px;top:325px;width:2.5px;height:4px;background:#222"></div>
<div style="position:absolute;left:1476px;top:328px;width:9px;height:2px;background:#222"></div>
<div style="position:absolute;left:1479px;top:325px;width:2.5px;height:4px;background:#222"></div>
<div style="position:absolute;left:1997px;top:328px;width:9px;height:2px;background:#222"></div>
<div style="position:absolute;left:2000px;top:325px;width:2.5px;height:4px;background:#222"></div>
<svg style="position:absolute;left:1680px;top:322px" width="30" height="12" viewBox="0 0 30 12"><path d="M3 4 Q13 12 24 4" fill="none" stroke="#222" stroke-width="2.4"/></svg>
<svg style="position:absolute;left:1784px;top:322px" width="34" height="12" viewBox="0 0 34 12"><path d="M9 3 L4 9" stroke="#222" stroke-width="2"/><path d="M24 3 Q26 7 31 9" fill="none" stroke="#222" stroke-width="1.8"/></svg>
<svg style="position:absolute;left:2140px;top:322px" width="20" height="12" viewBox="0 0 20 12"><path d="M14 3 Q12 7 7 9" fill="none" stroke="#222" stroke-width="1.8"/></svg>
<div style="position:absolute;left:1038px;top:386px;width:1210px;height:37px;background:#dcdcdc"></div>
<div style="position:absolute;left:1038px;top:476px;width:1210px;height:37px;background:#dcdcdc"></div>
<div style="position:absolute;left:1038px;top:529px;width:1210px;height:37px;background:#dcdcdc"></div>
<div style="position:absolute;top:388.20px;font-family:'Liberation Serif', serif;font-size:32px;line-height:32px;color:#000;font-weight:bold;white-space:nowrap;left:1038px;"><span style="color:#0000ee;text-decoration:underline">color bfactor</span> #2 palette alphafold</div>
<div style="position:absolute;top:425.20px;font-family:'Liberation Serif', serif;font-size:32px;line-height:32px;color:#000;font-weight:normal;white-space:nowrap;left:1038px;">4778 atoms, 508 residues, atom bfactor range 34.4 to 97.1</div>
<div style="position:absolute;top:477.70px;font-family:'Liberation Serif', serif;font-size:32px;line-height:32px;color:#000;font-weight:bold;white-space:nowrap;left:1038px;"><span style="color:#0000ee;text-decoration:underline">hide</span> #!1 models</div>
<div style="position:absolute;top:530.70px;font-family:'Liberation Serif', serif;font-size:32px;line-height:32px;color:#000;font-weight:bold;white-space:nowrap;left:1038px;"><span style="color:#0000ee;text-decoration:underline">help</span> help:boltz_help.html</div>
<div style="position:absolute;left:1021px;top:583px;width:1243px;height:42px;background:#ececec"></div>
<svg style="position:absolute;left:1026px;top:590.0px" width="28" height="28" viewBox="0 0 28 28"><circle cx="14" cy="14" r="13.9" fill="#5f5f5f"/><path d="M8.6 8.6L19.4 19.4M19.4 8.6L8.6 19.4" stroke="#ececec" stroke-width="3.2" stroke-linecap="round"/></svg>
<svg style="position:absolute;left:1062px;top:590.0px" width="28" height="28" viewBox="0 0 28 28"><circle cx="14" cy="14" r="13.9" fill="#5f5f5f"/><rect x="12" y="9" width="9.5" height="8" fill="none" stroke="#ececec" stroke-width="1.8"/><rect x="7" y="13" width="10" height="8.5" fill="#5f5f5f" stroke="#ececec" stroke-width="1.8"/></svg>
<div style="position:absolute;top:594.03px;font-family:'Liberation Sans', sans-serif;font-size:23px;line-height:23px;color:#1e1e1e;font-weight:normal;white-space:nowrap;letter-spacing:0.45px;left:1277.5px;width:800px;text-align:center;">Models</div>
<div style="position:absolute;left:1021px;top:625px;width:1242px;height:2px;background:#b5b5b5"></div>
<div style="position:absolute;left:1021px;top:627px;width:1243px;height:150px;background:#ececec"></div>
<div style="position:absolute;left:1022px;top:630px;width:1093px;height:147px;background:#fff;border:1px solid #a8a8a8;box-sizing:border-box"></div>
<div style="position:absolute;left:1023px;top:631px;width:1091px;height:35px;background:#ececec"></div>
<div style="position:absolute;left:1422px;top:636px;width:2px;height:26px;background:#cfcfcf"></div>
<div style="position:absolute;left:1462px;top:636px;width:2px;height:26px;background:#cfcfcf"></div>
<div style="position:absolute;left:1501px;top:636px;width:2px;height:26px;background:#cfcfcf"></div>
<div style="position:absolute;left:1559px;top:636px;width:2px;height:26px;background:#cfcfcf"></div>
<div style="position:absolute;left:2111px;top:636px;width:3px;height:24px;background:#bdbdbd"></div>
<div style="position:absolute;top:635.53px;font-family:'Liberation Sans', sans-serif;font-size:23px;line-height:23px;color:#1e1e1e;font-weight:normal;white-space:nowrap;letter-spacing:0.3px;left:1032px;">Name</div>
<div style="position:absolute;top:635.53px;font-family:'Liberation Sans', sans-serif;font-size:23px;line-height:23px;color:#1e1e1e;font-weight:normal;white-space:nowrap;letter-spacing:0.3px;left:1432px;">ID</div>
<svg style="position:absolute;left:1509px;top:637px" width="34" height="20" viewBox="0 0 34 20"><path d="M1.5 10 Q17 -5 32.5 10 Q17 25 1.5 10Z" fill="none" stroke="#111" stroke-width="2.4"/><circle cx="17" cy="10" r="5.5" fill="#111"/><circle cx="17" cy="10" r="2" fill="#fff"/></svg>
<svg style="position:absolute;left:1570px;top:630px" width="26" height="34" viewBox="0 0 26 34"><ellipse cx="11" cy="6.5" rx="6" ry="5.5" fill="#19c219" stroke="#0b7a0b" stroke-width="1"/><path d="M9 8 L11 22 L7 19 L6 22 L13 32 L22 32 L23 22 L14 18 L12 7Z" fill="#111"/></svg>
<svg style="position:absolute;left:1040px;top:677px" width="14" height="18" viewBox="0 0 14 18"><path d="M3 2 L10 9 L3 16" fill="none" stroke="#bdbdbd" stroke-width="2.4"/></svg>
<div style="position:absolute;top:671.64px;font-family:'Liberation Sans', sans-serif;font-size:27px;line-height:27px;color:#111;font-weight:normal;white-space:nowrap;left:1073px;">9gqu</div>
<div style="position:absolute;top:711.14px;font-family:'Liberation Sans', sans-serif;font-size:27px;line-height:27px;color:#111;font-weight:normal;white-space:nowrap;left:1073px;">ntca_dna_model_0.cif</div>
<div style="position:absolute;top:671.64px;font-family:'Liberation Sans', sans-serif;font-size:27px;line-height:27px;color:#111;font-weight:normal;white-space:nowrap;left:1434px;">1</div>
<div style="position:absolute;top:711.14px;font-family:'Liberation Sans', sans-serif;font-size:27px;line-height:27px;color:#111;font-weight:normal;white-space:nowrap;left:1434px;">2</div>
<div style="position:absolute;left:1464px;top:666px;width:32px;height:31px;background:#d2b48c;box-shadow:inset -2px -2px 0 #3a3a3a, inset 1px 1px 0 #c9c9c9"></div>
<svg style="position:absolute;left:1464px;top:706px" width="32" height="32" viewBox="0 0 32 32"><defs><linearGradient id="g1" x1="0" y1="1" x2="1" y2="0"><stop offset="0" stop-color="#00ffff"/><stop offset="0.5" stop-color="#ffffff"/><stop offset="1" stop-color="#ff00ff"/></linearGradient><linearGradient id="g2" x1="0" y1="0" x2="1" y2="1"><stop offset="0.3" stop-color="#ffff00" stop-opacity="0"/><stop offset="1" stop-color="#ffff00" stop-opacity="1"/></linearGradient></defs><rect x="1" y="1" width="30" height="30" fill="#fff" stroke="#bbb"/><rect x="5" y="5" width="24" height="23" fill="url(#g1)"/><rect x="5" y="5" width="24" height="23" fill="url(#g2)"/><path d="M31 1 V31 H1" fill="none" stroke="#333" stroke-width="2"/></svg>
<div style="position:absolute;left:1516px;top:672px;width:28px;height:28px;background:#fff;border-radius:6px;box-shadow:0 0 0 1px #d6d6d6, 0 1px 1px rgba(0,0,0,0.08)"></div>
<div style="position:absolute;left:1574px;top:672px;width:28px;height:28px;background:#fff;border-radius:6px;box-shadow:0 0 0 1px #d6d6d6, 0 1px 1px rgba(0,0,0,0.08)"></div>
<div style="position:absolute;left:1516px;top:712px;width:28px;height:28px;background:linear-gradient(#2c8dff,#0a72fe);border-radius:6px;box-shadow:0 0.5px 1px rgba(0,0,0,0.3)"></div>
<svg style="position:absolute;left:1516px;top:712px" width="28" height="28" viewBox="0 0 28 28"><path d="M7 14.5 L12 20 L21.5 8" fill="none" stroke="#fff" stroke-width="3.2" stroke-linecap="round" stroke-linejoin="round"/></svg>
<div style="position:absolute;left:1574px;top:712px;width:28px;height:28px;background:#fff;border-radius:6px;box-shadow:0 0 0 1px #d6d6d6, 0 1px 1px rgba(0,0,0,0.08)"></div>
<div style="position:absolute;left:2116px;top:630px;width:147px;height:147px;background:#ececec;border:1px solid #a8a8a8;box-sizing:border-box"></div>
<div style="position:absolute;left:2120px;top:642px;width:124px;height:40px;background:#fff;border-radius:9px;box-shadow:0 0 0 0.5px rgba(0,0,0,0.12),0 1px 1.5px rgba(0,0,0,0.22)"></div>
<div style="position:absolute;top:647.34px;font-family:'Liberation Sans', sans-serif;font-size:27px;line-height:27px;color:#111;font-weight:normal;white-space:nowrap;left:1782.0px;width:800px;text-align:center;">Close</div>
<div style="position:absolute;left:2120px;top:690px;width:124px;height:40px;background:#fff;border-radius:9px;box-shadow:0 0 0 0.5px rgba(0,0,0,0.12),0 1px 1.5px rgba(0,0,0,0.22)"></div>
<div style="position:absolute;top:695.34px;font-family:'Liberation Sans', sans-serif;font-size:27px;line-height:27px;color:#111;font-weight:normal;white-space:nowrap;left:1782.0px;width:800px;text-align:center;">Hide</div>
<div style="position:absolute;left:2120px;top:738px;width:124px;height:40px;background:#fff;border-radius:9px;box-shadow:0 0 0 0.5px rgba(0,0,0,0.12),0 1px 1.5px rgba(0,0,0,0.22)"></div>
<div style="position:absolute;top:743.34px;font-family:'Liberation Sans', sans-serif;font-size:27px;line-height:27px;color:#111;font-weight:normal;white-space:nowrap;left:1782.0px;width:800px;text-align:center;">Show</div>
<div style="position:absolute;left:1021px;top:777.5px;width:1243px;height:2px;background:#ececec"></div>
<div style="position:absolute;left:1021px;top:776px;width:1243px;height:2px;background:#a9a9a9"></div>
<div style="position:absolute;left:1021px;top:779px;width:1243px;height:42px;background:#ececec"></div>
<svg style="position:absolute;left:1026px;top:786.0px" width="28" height="28" viewBox="0 0 28 28"><circle cx="14" cy="14" r="13.9" fill="#5f5f5f"/><path d="M8.6 8.6L19.4 19.4M19.4 8.6L8.6 19.4" stroke="#ececec" stroke-width="3.2" stroke-linecap="round"/></svg>
<svg style="position:absolute;left:1062px;top:786.0px" width="28" height="28" viewBox="0 0 28 28"><circle cx="14" cy="14" r="13.9" fill="#5f5f5f"/><rect x="12" y="9" width="9.5" height="8" fill="none" stroke="#ececec" stroke-width="1.8"/><rect x="7" y="13" width="10" height="8.5" fill="#5f5f5f" stroke="#ececec" stroke-width="1.8"/></svg>
<div style="position:absolute;top:790.03px;font-family:'Liberation Sans', sans-serif;font-size:23px;line-height:23px;color:#1e1e1e;font-weight:normal;white-space:nowrap;letter-spacing:0.7px;left:1277.5px;width:800px;text-align:center;">Boltz Structure Predicton</div>
<div style="position:absolute;left:1021px;top:821px;width:1242px;height:2px;background:#b5b5b5"></div>
<div style="position:absolute;top:834.14px;font-family:'Liberation Sans', sans-serif;font-size:27px;line-height:27px;color:#111;font-weight:normal;white-space:nowrap;left:1031px;">Prediction name</div>
<div style="position:absolute;left:1238px;top:828px;width:196px;height:38px;background:#fff;box-shadow:0 0 0 0.5px #cfcfcf, 0 1px 0 #bdbdbd"></div>
<div style="position:absolute;top:834.14px;font-family:'Liberation Sans', sans-serif;font-size:27px;line-height:27px;color:#111;font-weight:normal;white-space:nowrap;left:1239px;">ntca_dna</div>
<div style="position:absolute;left:1038px;top:878px;width:106px;height:40px;background:#fff;border-radius:9px;box-shadow:0 0 0 0.5px rgba(0,0,0,0.12),0 1px 1.5px rgba(0,0,0,0.22)"></div>
<div style="position:absolute;top:883.34px;font-family:'Liberation Sans', sans-serif;font-size:27px;line-height:27px;color:#111;font-weight:normal;white-space:nowrap;left:691.0px;width:800px;text-align:center;">Add</div>
<div style="position:absolute;top:883.14px;font-family:'Liberation Sans', sans-serif;font-size:27px;line-height:27px;color:#111;font-weight:normal;white-space:nowrap;left:1154.5px;">molecule</div>
<div style="position:absolute;left:1274px;top:877px;width:274px;height:40px;background:#fff;border-radius:9px;box-shadow:0 0 0 0.5px rgba(0,0,0,0.12),0 1px 1.5px rgba(0,0,0,0.22)"></div>
<div style="position:absolute;top:883.64px;font-family:'Liberation Sans', sans-serif;font-size:27px;line-height:27px;color:#111;font-weight:normal;white-space:nowrap;left:1291px;">ligand CCD code</div>
<div style="position:absolute;left:1512px;top:881px;width:32px;height:32px;background:linear-gradient(#2c8dff,#0a72fe);border-radius:7px"></div>
<svg style="position:absolute;left:1512px;top:881px" width="32" height="32" viewBox="0 0 32 32"><path d="M10 13.5 L16 19.5 L22 13.5" fill="none" stroke="#fff" stroke-width="2.6" stroke-linecap="round" stroke-linejoin="round"/></svg>
<div style="position:absolute;left:1562px;top:878px;width:246px;height:39px;background:#fff;box-shadow:0 0 0 0.5px #cfcfcf, 0 1px 0 #bdbdbd"></div>
<div style="position:absolute;top:883.64px;font-family:'Liberation Sans', sans-serif;font-size:27px;line-height:27px;color:#111;font-weight:normal;white-space:nowrap;left:1562.5px;">AKG</div>
<div style="position:absolute;left:1822px;top:878px;width:306px;height:40px;background:#fff;border-radius:9px;box-shadow:0 0 0 0.5px rgba(0,0,0,0.12),0 1px 1.5px rgba(0,0,0,0.22)"></div>
<div style="position:absolute;top:883.34px;font-family:'Liberation Sans', sans-serif;font-size:27px;line-height:27px;color:#111;font-weight:normal;white-space:nowrap;left:1575.0px;width:800px;text-align:center;">Delete selected rows</div>
<div style="position:absolute;left:2142px;top:878px;width:121px;height:40px;background:#fff;border-radius:9px;box-shadow:0 0 0 0.5px rgba(0,0,0,0.12),0 1px 1.5px rgba(0,0,0,0.22)"></div>
<div style="position:absolute;top:883.34px;font-family:'Liberation Sans', sans-serif;font-size:27px;line-height:27px;color:#111;font-weight:normal;white-space:nowrap;left:1802.5px;width:800px;text-align:center;">Clear</div>
<div style="position:absolute;left:1032px;top:934px;width:1231px;height:200px;background:#fff;border:1px solid #a8a8a8;box-sizing:border-box"></div>
<div style="position:absolute;left:1033px;top:935px;width:1229px;height:43px;background:#ececec"></div>
<div style="position:absolute;left:1672px;top:940px;width:2px;height:36px;background:#cfcfcf"></div>
<div style="position:absolute;left:1792px;top:940px;width:2px;height:36px;background:#cfcfcf"></div>
<div style="position:absolute;top:943.53px;font-family:'Liberation Sans', sans-serif;font-size:23px;line-height:23px;color:#1e1e1e;font-weight:normal;white-space:nowrap;letter-spacing:0.37px;left:1042px;">Molecular component</div>
<div style="position:absolute;top:943.53px;font-family:'Liberation Sans', sans-serif;font-size:23px;line-height:23px;color:#1e1e1e;font-weight:normal;white-space:nowrap;letter-spacing:0.37px;left:1333.5px;width:800px;text-align:center;">Count</div>
<div style="position:absolute;left:1672px;top:978px;width:2px;height:155px;background:#dedede"></div>
<div style="position:absolute;left:1792px;top:978px;width:2px;height:155px;background:#dedede"></div>
<div style="position:absolute;left:1033px;top:1018px;width:759px;height:2px;background:#dedede"></div>
<div style="position:absolute;left:1033px;top:1078px;width:759px;height:2px;background:#dedede"></div>
<div style="position:absolute;top:984.56px;font-family:'Liberation Sans', sans-serif;font-size:26.5px;line-height:26.5px;color:#111;font-weight:normal;white-space:nowrap;letter-spacing:0.1px;left:1043px;">Global nitrogen regulator, protein #1/A,B, length 222</div>
<div style="position:absolute;top:1034.06px;font-family:'Liberation Sans', sans-serif;font-size:26.5px;line-height:26.5px;color:#111;font-weight:normal;white-space:nowrap;letter-spacing:-0.28px;left:1043px;">dna sequence length 31: CATTTTTATGTATCAGCT...</div>
<div style="position:absolute;top:1093.64px;font-family:'Liberation Sans', sans-serif;font-size:27px;line-height:27px;color:#111;font-weight:normal;white-space:nowrap;left:1043px;">AKG</div>
<div style="position:absolute;top:984.14px;font-family:'Liberation Sans', sans-serif;font-size:27px;line-height:27px;color:#111;font-weight:normal;white-space:nowrap;left:1333px;width:800px;text-align:center;">2</div>
<div style="position:absolute;top:1033.64px;font-family:'Liberation Sans', sans-serif;font-size:27px;line-height:27px;color:#111;font-weight:normal;white-space:nowrap;left:1333px;width:800px;text-align:center;">2</div>
<div style="position:absolute;top:1093.64px;font-family:'Liberation Sans', sans-serif;font-size:27px;line-height:27px;color:#111;font-weight:normal;white-space:nowrap;left:1333px;width:800px;text-align:center;">2</div>
<div style="position:absolute;top:1139.14px;font-family:'Liberation Sans', sans-serif;font-size:27px;line-height:27px;color:#111;font-weight:normal;white-space:nowrap;left:1031px;">Prediction completed in 115 seconds</div>
<div style="position:absolute;left:1034px;top:1178px;width:142px;height:40px;background:#fff;border-radius:9px;box-shadow:0 0 0 0.5px rgba(0,0,0,0.12),0 1px 1.5px rgba(0,0,0,0.22)"></div>
<div style="position:absolute;top:1183.34px;font-family:'Liberation Sans', sans-serif;font-size:27px;line-height:27px;color:#111;font-weight:normal;white-space:nowrap;left:705.0px;width:800px;text-align:center;">Predict</div>
<div style="position:absolute;left:1190px;top:1178px;width:168px;height:40px;background:#fff;border-radius:9px;box-shadow:0 0 0 0.5px rgba(0,0,0,0.12),0 1px 1.5px rgba(0,0,0,0.22)"></div>
<div style="position:absolute;top:1183.34px;font-family:'Liberation Sans', sans-serif;font-size:27px;line-height:27px;color:#111;font-weight:normal;white-space:nowrap;left:874.0px;width:800px;text-align:center;">Error plot</div>
<div style="position:absolute;left:1372px;top:1178px;width:150px;height:40px;background:#fff;border-radius:9px;box-shadow:0 0 0 0.5px rgba(0,0,0,0.12),0 1px 1.5px rgba(0,0,0,0.22)"></div>
<div style="position:absolute;top:1183.34px;font-family:'Liberation Sans', sans-serif;font-size:27px;line-height:27px;color:#111;font-weight:normal;white-space:nowrap;left:1047.0px;width:800px;text-align:center;">Options</div>
<div style="position:absolute;left:1536px;top:1178px;width:112px;height:40px;background:#fff;border-radius:9px;box-shadow:0 0 0 0.5px rgba(0,0,0,0.12),0 1px 1.5px rgba(0,0,0,0.22)"></div>
<div style="position:absolute;top:1183.34px;font-family:'Liberation Sans', sans-serif;font-size:27px;line-height:27px;color:#111;font-weight:normal;white-space:nowrap;left:1192.0px;width:800px;text-align:center;">Help</div>
<div style="position:absolute;left:1021px;top:1245px;width:1243px;height:2px;background:#a8a8a8"></div>
<div style="position:absolute;left:0px;top:1247px;width:2264px;height:65px;background:#ececec"></div>
<div style="position:absolute;top:1266.56px;font-family:'Liberation Sans', sans-serif;font-size:26.5px;line-height:26.5px;color:#111;font-weight:normal;white-space:nowrap;left:3px;">Command:</div>
<div style="position:absolute;left:140px;top:1260px;width:2114px;height:40px;background:#fff;border-radius:9px;box-shadow:0 0 0 0.5px rgba(0,0,0,0.15),0 1px 1.5px rgba(0,0,0,0.2)"></div>
<div style="position:absolute;left:144px;top:1264px;width:142px;height:30px;background:#a9d1ff"></div>
<div style="position:absolute;top:1266.56px;font-family:'Liberation Sans', sans-serif;font-size:26.5px;line-height:26.5px;color:#111;font-weight:normal;white-space:nowrap;left:144px;">open 9GQU</div>
<div style="position:absolute;left:2218px;top:1264px;width:32px;height:32px;background:linear-gradient(#2c8dff,#0a72fe);border-radius:7px"></div>
<svg style="position:absolute;left:2218px;top:1264px" width="32" height="32" viewBox="0 0 32 32"><path d="M10 13.5 L16 19.5 L22 13.5" fill="none" stroke="#fff" stroke-width="2.6" stroke-linecap="round" stroke-linejoin="round"/></svg>
<div style="position:absolute;left:0px;top:1312px;width:2264px;height:1px;background:#6e6e6e"></div>
<div style="position:absolute;left:0px;top:1313px;width:2264px;height:61px;background:#ececec"></div>
<div style="position:absolute;left:4px;top:1318px;width:2110px;height:52px;background:#d9d9d9"></div>
<div style="position:absolute;left:2126px;top:1318px;width:52px;height:51px;background:#f2f2f2;border:1.5px solid #a9a9a9;box-sizing:border-box"></div>
<svg style="position:absolute;left:2135px;top:1327px" width="34" height="33" viewBox="0 0 34 33"><rect x="2" y="2" width="14" height="14" fill="none" stroke="#111" stroke-width="2.4"/><rect x="2" y="2" width="30" height="30" fill="none" stroke="#111" stroke-width="1.6" stroke-dasharray="2,2"/><path d="M18 19 L28 28 M22 28 H28 V22" fill="none" stroke="#1a9a1a" stroke-width="2"/></svg>
<div style="position:absolute;left:2190px;top:1318px;width:52px;height:51px;background:#f2f2f2;border:1.5px solid #a9a9a9;box-sizing:border-box"></div>
<div style="position:absolute;left:2200px;top:1328px;width:32px;height:32px;background:#000080"></div>
<svg style="position:absolute;left:2200px;top:1328px" width="32" height="32" viewBox="0 0 32 32"><path d="M26.5 5.5 L11 16.5 L20.5 14 L5 26.5" fill="none" stroke="#f5f500" stroke-width="4.2" stroke-linejoin="miter" stroke-miterlimit="3"/></svg>
</div></body></html>
